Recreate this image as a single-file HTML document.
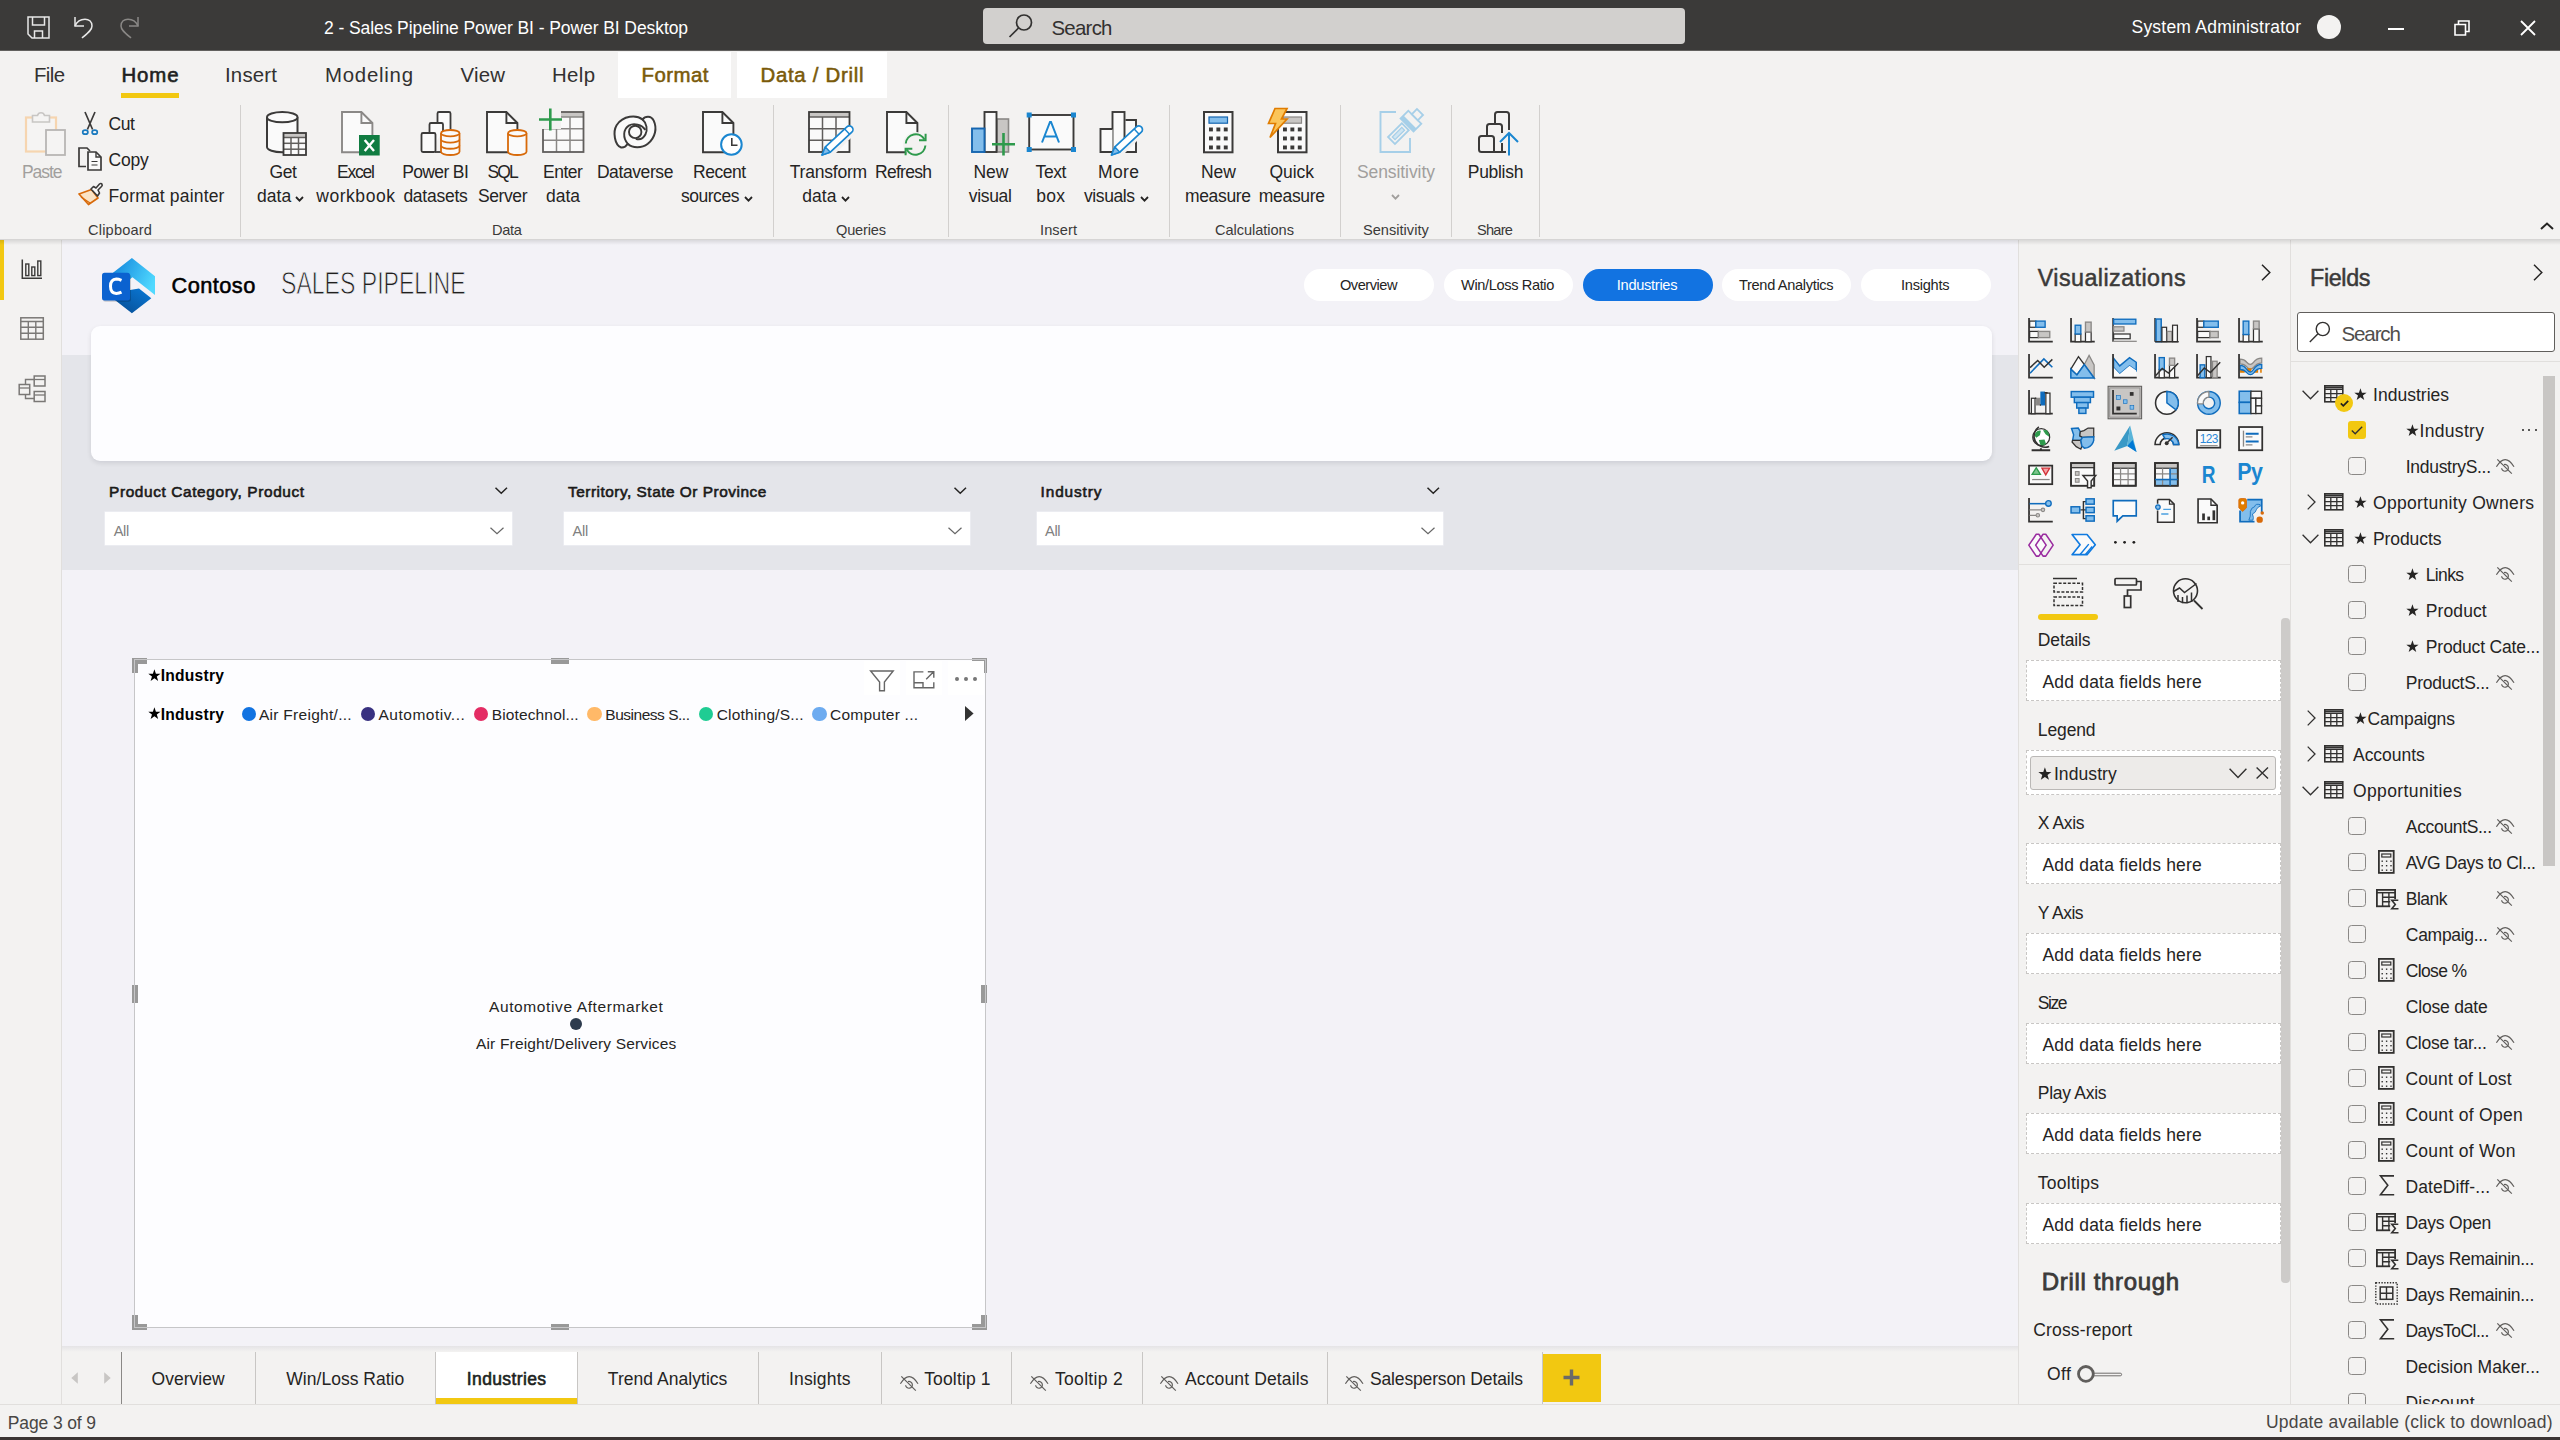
<!DOCTYPE html>
<html>
<head>
<meta charset="utf-8">
<title>Power BI Desktop</title>
<style>
*{box-sizing:border-box;margin:0;padding:0}
html,body{width:2560px;height:1440px;overflow:hidden;background:#f3f2f1;font-family:"Liberation Sans",sans-serif;color:#252423}
.a{position:absolute}
.t{position:absolute;white-space:nowrap;line-height:1;transform-origin:0 0}
.c{text-align:center}
svg{position:absolute;overflow:visible}
/* title bar */
#title{left:0;top:0;width:2560px;height:51px;background:linear-gradient(#3b3a39 0,#3b3a39 50px,#62615f 50px,#62615f 51px)}
#tsearch{left:983px;top:8px;width:702px;height:36px;background:#d2d0ce;border-radius:4px}
/* ribbon */
#ribbon{left:0;top:51px;width:2560px;height:188px;background:#f3f2f1}
#ribshadow{left:0;top:239px;width:2560px;height:6px;background:linear-gradient(rgba(0,0,0,0.13),rgba(0,0,0,0));z-index:5}
.tab{font-size:20.5px;color:#323130;top:65px}
.ctab{background:#fff;top:52px;height:46px}
.sep{width:1px;background:#d2d0ce;top:105px;height:132px}
.rl{font-size:18.4px;color:#252423}
.gl{font-size:14.6px;color:#3b3a39;top:222px}
/* left nav */
#lnav{left:0;top:240px;width:62px;height:1165px;background:#f3f2f1;border-right:1px solid #e1dfdd}
/* canvas */
#canvas{left:62px;top:240px;width:1956px;height:1106px;background:#f3f2f7;overflow:hidden}
#band{left:0;top:115px;width:1956px;height:215px;background:#e4e5ea}
/* panes */
#viz{left:2018px;top:240px;width:272px;height:1165px;background:#f3f2f1;border-left:1px solid #e1dfdd}
#fields{left:2290px;top:240px;width:270px;height:1165px;background:#f3f2f1;border-left:1px solid #e1dfdd}
/* page tabs */
#ptabs{left:62px;top:1346px;width:1956px;height:59px;background:#f3f2f1}
/* status */
#status{left:0;top:1404px;width:2560px;height:32px;background:#f3f2f1;border-top:1px solid #e1dfdd}
#taskbar{left:0;top:1437px;width:2560px;height:3px;background:#3b3433}
</style>
</head>
<body>
<!-- TITLE BAR -->
<div id="title" class="a">
<div id="tsearch" class="a"></div>
<svg style="left:27px;top:16px;" width="23" height="23" viewBox="0 0 23 23"><path d="M1 1H22V22H5L1 18Z" fill="none" stroke="#e8e8e8" stroke-width="1.5"/><path d="M5.5 1V9H17.5V1M7.5 22V15H15.5V22" fill="none" stroke="#e8e8e8" stroke-width="1.5"/></svg>
<svg style="left:72px;top:14px;" width="24" height="26" viewBox="0 0 24 26"><path d="M3 3V12H12" fill="none" stroke="#e8e8e8" stroke-width="1.5"/><path d="M3 12C7 3 20 3 20 12C20 16 16 19 10 24" fill="none" stroke="#e8e8e8" stroke-width="1.5"/></svg>
<svg style="left:117px;top:14px;" width="24" height="26" viewBox="0 0 24 26"><path d="M21 3V12H12" fill="none" stroke="#8a8886" stroke-width="1.5"/><path d="M21 12C17 3 4 3 4 12C4 16 8 19 14 24" fill="none" stroke="#8a8886" stroke-width="1.5"/></svg>
<div class="t" style="left:324.0px;top:20px;font-size:17.5px;letter-spacing:-0.08px;color:#ffffff;">2 - Sales Pipeline Power BI - Power BI Desktop</div>
<svg style="left:1008px;top:13px;" width="26" height="26" viewBox="0 0 26 26"><circle cx="16" cy="9.5" r="7.5" fill="none" stroke="#323130" stroke-width="1.7"/><path d="M10.5 15L1.5 24" stroke="#323130" stroke-width="1.7"/></svg>
<div class="t" style="left:1051.5px;top:18px;font-size:20.4px;letter-spacing:-0.73px;color:#323130;">Search</div>
<div class="t" style="left:2131.5px;top:19px;font-size:17.5px;letter-spacing:0.22px;color:#ffffff;">System Administrator</div>
<div class="a" style="left:2317px;top:15px;width:24px;height:24px;background:#f3f2f1;border-radius:50%;"></div>
<div class="a" style="left:2388px;top:28px;width:16px;height:2px;background:#fff;"></div>
<svg style="left:2454px;top:20px;" width="16" height="16" viewBox="0 0 16 16"><path d="M1 4.5H11.5V15H1Z M4.5 4.5V1H15V11.5H11.5" fill="none" stroke="#fff" stroke-width="1.6"/></svg>
<svg style="left:2520px;top:20px;" width="16" height="16" viewBox="0 0 16 16"><path d="M1 1L15 15M15 1L1 15" stroke="#fff" stroke-width="1.8"/></svg>

</div>
<!-- RIBBON -->
<div id="ribbon" class="a"></div>
<div class="a" style="left:618px;top:52px;width:113px;height:46px;background:#fff;"></div>
<div class="a" style="left:737px;top:52px;width:150px;height:46px;background:#fff;"></div>
<div class="t" style="left:34.0px;top:65px;font-size:20.4px;letter-spacing:-0.62px;color:#323130;">File</div>
<div class="t" style="left:121.5px;top:65px;font-size:20.4px;letter-spacing:0.86px;color:#201f1e;-webkit-text-stroke:0.6px #201f1e;">Home</div>
<div class="a" style="left:121px;top:93px;width:58px;height:4.5px;background:#f2c811;"></div>
<div class="t" style="left:225.0px;top:65px;font-size:20.4px;letter-spacing:0.20px;color:#323130;">Insert</div>
<div class="t" style="left:325.0px;top:65px;font-size:20.4px;letter-spacing:0.75px;color:#323130;">Modeling</div>
<div class="t" style="left:460.5px;top:65px;font-size:20.4px;letter-spacing:0.20px;color:#323130;">View</div>
<div class="t" style="left:552.0px;top:65px;font-size:20.4px;letter-spacing:0.35px;color:#323130;">Help</div>
<div class="t" style="left:641.5px;top:65px;font-size:20.4px;letter-spacing:0.48px;color:#7a5a0a;-webkit-text-stroke:0.55px #7a5a0a;">Format</div>
<div class="t" style="left:760.5px;top:65px;font-size:20.4px;letter-spacing:0.71px;color:#7a5a0a;-webkit-text-stroke:0.55px #7a5a0a;">Data / Drill</div>
<svg style="left:2540px;top:222px;" width="14" height="8" viewBox="0 0 14 8"><path d="M1 7L7 1.5L13 7" fill="none" stroke="#252423" stroke-width="2"/></svg>
<div class="a" style="left:240px;top:105px;width:1px;height:132px;background:#d2d0ce;"></div>
<div class="a" style="left:773px;top:105px;width:1px;height:132px;background:#d2d0ce;"></div>
<div class="a" style="left:948px;top:105px;width:1px;height:132px;background:#d2d0ce;"></div>
<div class="a" style="left:1169px;top:105px;width:1px;height:132px;background:#d2d0ce;"></div>
<div class="a" style="left:1340px;top:105px;width:1px;height:132px;background:#d2d0ce;"></div>
<div class="a" style="left:1451px;top:105px;width:1px;height:132px;background:#d2d0ce;"></div>
<div class="a" style="left:1539px;top:105px;width:1px;height:132px;background:#d2d0ce;"></div>
<div class="t" style="left:22.0px;top:164px;font-size:17.5px;letter-spacing:-1.06px;color:#a19f9d;">Paste</div>
<div class="t" style="left:108.4px;top:116px;font-size:17.5px;letter-spacing:-0.32px;color:#252423;">Cut</div>
<div class="t" style="left:108.4px;top:152px;font-size:17.5px;letter-spacing:-0.15px;color:#252423;">Copy</div>
<div class="t" style="left:108.4px;top:188px;font-size:17.5px;letter-spacing:0.17px;color:#252423;">Format painter</div>
<div class="t" style="left:269.4px;top:164px;font-size:17.5px;letter-spacing:-0.36px;color:#252423;">Get</div>
<div class="t" style="left:256.9px;top:188px;font-size:17.5px;letter-spacing:0.11px;color:#252423;">data</div>
<svg style="left:294.5px;top:195.5px;" width="9" height="6" viewBox="0 0 9 6"><path d="M1 1L4.5 4.6L8 1" fill="none" stroke="#252423" stroke-width="1.8"/></svg>
<div class="t" style="left:336.9px;top:164px;font-size:17.5px;letter-spacing:-1.17px;color:#252423;">Excel</div>
<div class="t" style="left:316.3px;top:188px;font-size:17.5px;letter-spacing:0.53px;color:#252423;">workbook</div>
<div class="t" style="left:402.2px;top:164px;font-size:17.5px;letter-spacing:-0.63px;color:#252423;">Power BI</div>
<div class="t" style="left:403.4px;top:188px;font-size:17.5px;letter-spacing:-0.25px;color:#252423;">datasets</div>
<div class="t" style="left:487.5px;top:164px;font-size:17.5px;letter-spacing:-1.86px;color:#252423;">SQL</div>
<div class="t" style="left:478.0px;top:188px;font-size:17.5px;letter-spacing:-0.41px;color:#252423;">Server</div>
<div class="t" style="left:543.0px;top:164px;font-size:17.5px;letter-spacing:-0.51px;color:#252423;">Enter</div>
<div class="t" style="left:546.0px;top:188px;font-size:17.5px;letter-spacing:-0.02px;color:#252423;">data</div>
<div class="t" style="left:596.9px;top:164px;font-size:17.5px;letter-spacing:-0.41px;color:#252423;">Dataverse</div>
<div class="t" style="left:693.0px;top:164px;font-size:17.5px;letter-spacing:-0.49px;color:#252423;">Recent</div>
<div class="t" style="left:681.0px;top:188px;font-size:17.5px;letter-spacing:-0.48px;color:#252423;">sources</div>
<svg style="left:744px;top:195.5px;" width="9" height="6" viewBox="0 0 9 6"><path d="M1 1L4.5 4.6L8 1" fill="none" stroke="#252423" stroke-width="1.8"/></svg>
<div class="t" style="left:789.7px;top:164px;font-size:17.5px;letter-spacing:-0.20px;color:#252423;">Transform</div>
<div class="t" style="left:802.2px;top:188px;font-size:17.5px;letter-spacing:0.11px;color:#252423;">data</div>
<svg style="left:840.5px;top:195.5px;" width="9" height="6" viewBox="0 0 9 6"><path d="M1 1L4.5 4.6L8 1" fill="none" stroke="#252423" stroke-width="1.8"/></svg>
<div class="t" style="left:875.0px;top:164px;font-size:17.5px;letter-spacing:-0.73px;color:#252423;">Refresh</div>
<div class="t" style="left:973.4px;top:164px;font-size:17.5px;letter-spacing:-0.03px;color:#252423;">New</div>
<div class="t" style="left:968.8px;top:188px;font-size:17.5px;letter-spacing:-0.33px;color:#252423;">visual</div>
<div class="t" style="left:1035.6px;top:164px;font-size:17.5px;letter-spacing:-0.46px;color:#252423;">Text</div>
<div class="t" style="left:1036.3px;top:188px;font-size:17.5px;letter-spacing:0.25px;color:#252423;">box</div>
<div class="t" style="left:1098.0px;top:164px;font-size:17.5px;letter-spacing:0.38px;color:#252423;">More</div>
<div class="t" style="left:1084.0px;top:188px;font-size:17.5px;letter-spacing:-0.42px;color:#252423;">visuals</div>
<svg style="left:1139.5px;top:195.5px;" width="9" height="6" viewBox="0 0 9 6"><path d="M1 1L4.5 4.6L8 1" fill="none" stroke="#252423" stroke-width="1.8"/></svg>
<div class="t" style="left:1201.0px;top:164px;font-size:17.5px;letter-spacing:-0.03px;color:#252423;">New</div>
<div class="t" style="left:1185.0px;top:188px;font-size:17.5px;letter-spacing:-0.35px;color:#252423;">measure</div>
<div class="t" style="left:1269.4px;top:164px;font-size:17.5px;letter-spacing:-0.04px;color:#252423;">Quick</div>
<div class="t" style="left:1258.8px;top:188px;font-size:17.5px;letter-spacing:-0.32px;color:#252423;">measure</div>
<div class="t" style="left:1356.9px;top:164px;font-size:17.5px;letter-spacing:-0.07px;color:#a19f9d;">Sensitivity</div>
<svg style="left:1391px;top:193.5px;" width="9" height="6" viewBox="0 0 9 6"><path d="M1 1L4.5 4.6L8 1" fill="none" stroke="#a19f9d" stroke-width="1.8"/></svg>
<div class="t" style="left:1467.8px;top:164px;font-size:17.5px;letter-spacing:-0.30px;color:#252423;">Publish</div>
<div class="t" style="left:88.0px;top:223px;font-size:14.6px;letter-spacing:0.19px;color:#3b3a39;">Clipboard</div>
<div class="t" style="left:492.0px;top:223px;font-size:14.6px;letter-spacing:-0.28px;color:#3b3a39;">Data</div>
<div class="t" style="left:836.0px;top:223px;font-size:14.6px;letter-spacing:-0.19px;color:#3b3a39;">Queries</div>
<div class="t" style="left:1040.0px;top:223px;font-size:14.6px;letter-spacing:0.10px;color:#3b3a39;">Insert</div>
<div class="t" style="left:1215.0px;top:223px;font-size:14.6px;letter-spacing:-0.05px;color:#3b3a39;">Calculations</div>
<div class="t" style="left:1363.0px;top:223px;font-size:14.6px;letter-spacing:0.01px;color:#3b3a39;">Sensitivity</div>
<div class="t" style="left:1477.0px;top:223px;font-size:14.6px;letter-spacing:-0.74px;color:#3b3a39;">Share</div>
<svg style="left:0px;top:100px;" width="1560" height="140" viewBox="0 100 1560 140"><rect x="26" y="117.5" width="30" height="34" fill="#f5f4f3" stroke="#f6d5b0" stroke-width="2.2"/><path d="M32.5 122V115.5H37.5A3.6 3.6 0 0 1 44.5 115.5H49.5V122Z" fill="#f5f4f3" stroke="#c8c6c4" stroke-width="1.6"/><rect x="46" y="130" width="19" height="25" fill="#f5f4f3" stroke="#b8b6b4" stroke-width="1.8"/><path d="M85 112L92.6 129.5M95 112L87.4 129.5" stroke="#3b3a39" stroke-width="1.7" fill="none"/><ellipse cx="85.3" cy="132.2" rx="2.6" ry="2" fill="none" stroke="#1a7abf" stroke-width="1.7"/><ellipse cx="94.7" cy="132.2" rx="2.6" ry="2" fill="none" stroke="#1a7abf" stroke-width="1.7"/><path d="M86 166.5H79V148H87L90 151" fill="none" stroke="#3b3a39" stroke-width="1.7"/><path d="M88 152H96L101 157V170H88Z" fill="#fafafa" stroke="#3b3a39" stroke-width="1.7"/><path d="M96 152V157H101" fill="none" stroke="#3b3a39" stroke-width="1.4"/><path d="M91.5 161.5H97.5M91.5 165H97.5" stroke="#3b3a39" stroke-width="1.2"/><path d="M79 194L91.5 189.5L98 198L88.5 204.5Z" fill="#fbe3c4" stroke="#d86a0a" stroke-width="1.7" stroke-linejoin="round"/><path d="M81 197L90 203" stroke="#d86a0a" stroke-width="1.4"/><path d="M91 189L93.5 186.5L96 188L99.5 184Q101 182.8 102 184.3Q102.6 185.5 101.5 186.5L98 190L99.5 193L97.5 196Z" fill="#fafafa" stroke="#3b3a39" stroke-width="1.6" stroke-linejoin="round"/><path d="M267 117.185V147.115A15.25 5.1850000000000005 0 0 0 297.5 147.115V117.185" fill="#fafafa" stroke="#3b3a39" stroke-width="2"/><ellipse cx="282.25" cy="117.185" rx="15.25" ry="5.1850000000000005" fill="#fafafa" stroke="#3b3a39" stroke-width="2"/><rect x="283.5" y="133" width="22.5" height="22" fill="#fafafa" stroke="none"/><rect x="283.5" y="133" width="22.5" height="4.5" fill="#c8c6c4"/><path d="M283.5 137.5H306.0" stroke="#605e5c" stroke-width="1.5"/><path d="M291.0 137.5V155" stroke="#605e5c" stroke-width="1.5"/><path d="M298.5 137.5V155" stroke="#605e5c" stroke-width="1.5"/><path d="M283.5 143.3H306.0" stroke="#605e5c" stroke-width="1.5"/><path d="M283.5 149.2H306.0" stroke="#605e5c" stroke-width="1.5"/><rect x="283.5" y="133" width="22.5" height="22" fill="none" stroke="#3b3a39" stroke-width="1.8"/><path d="M342 112H361.4L372.4 123V152.3H342Z" fill="#fafafa" stroke="#8a8886" stroke-width="1.9"/><path d="M361.4 112V123H372.4" fill="none" stroke="#8a8886" stroke-width="1.9"/><rect x="359" y="135" width="20.7" height="20.5" fill="#107c41"/><path d="M364.7 140L374 151M374 140L364.7 151" stroke="#fff" stroke-width="2.4"/><path d="M437.5 128V113.5Q437.5 112 439 112H449Q450.5 112 450.5 113.5V130" fill="#fafafa" stroke="#3b3a39" stroke-width="1.8"/><path d="M429.5 152V124.5Q429.5 123 431 123H441.5Q443 123 443 124.5V131" fill="#fafafa" stroke="#3b3a39" stroke-width="1.8"/><rect x="421.5" y="133" width="14" height="19" rx="1.5" fill="#fafafa" stroke="#3b3a39" stroke-width="1.8"/><path d="M435 152H441" stroke="#3b3a39" stroke-width="1.8"/><path d="M441 133.145V151.855A9.25 3.145 0 0 0 459.5 151.855V133.145" fill="#fafafa" stroke="#d86a0a" stroke-width="1.8"/><ellipse cx="450.25" cy="133.145" rx="9.25" ry="3.145" fill="#fafafa" stroke="#d86a0a" stroke-width="1.8"/><path d="M441 139.3816666666667A9.25 3.145 0 0 0 459.5 139.3816666666667" fill="none" stroke="#d86a0a" stroke-width="1.8"/><path d="M441 145.61833333333334A9.25 3.145 0 0 0 459.5 145.61833333333334" fill="none" stroke="#d86a0a" stroke-width="1.8"/><path d="M487 112H506.4L517.4 123V152.3H487Z" fill="#fafafa" stroke="#3b3a39" stroke-width="1.9"/><path d="M506.4 112V123H517.4" fill="none" stroke="#3b3a39" stroke-width="1.9"/><path d="M508 133.145V151.855A9.25 3.145 0 0 0 526.5 151.855V133.145" fill="#fafafa" stroke="#d86a0a" stroke-width="1.8"/><ellipse cx="517.25" cy="133.145" rx="9.25" ry="3.145" fill="#fafafa" stroke="#d86a0a" stroke-width="1.8"/><rect x="543" y="112" width="40.5" height="40" fill="#fafafa" stroke="none"/><rect x="543" y="112" width="40.5" height="5" fill="#c8c6c4"/><path d="M543 117H583.5" stroke="#8a8886" stroke-width="1.5"/><path d="M556.5 117V152" stroke="#8a8886" stroke-width="1.5"/><path d="M570.0 117V152" stroke="#8a8886" stroke-width="1.5"/><path d="M543 128.7H583.5" stroke="#8a8886" stroke-width="1.5"/><path d="M543 140.3H583.5" stroke="#8a8886" stroke-width="1.5"/><rect x="543" y="112" width="40.5" height="40" fill="none" stroke="#605e5c" stroke-width="1.8"/><rect x="540" y="109" width="21" height="20" fill="#f3f2f1"/><path d="M550.3 108.5V130.5M539 119.5H562" stroke="#2e9a4c" stroke-width="2.6"/><path d="M642.5 119.6 C636.5 114.6 623.2 115.3 616.6 125.2 C612.6 131.9 614.6 145.2 621.2 147.5 C624.5 147.8 626.5 145.8 627.8 143.8 C632.5 148.5 641.8 148.5 647.8 143.8 C655.7 137.2 657.1 127.9 653.7 120.6 C651.1 115.3 645.1 115.9 642.5 119.6Z" fill="#fafafa" stroke="#3b3a39" stroke-width="2" stroke-linejoin="round"/><path d="M627.8 143.8 C622.5 137.8 623.2 129.2 628.8 125.6 C633.8 122.6 641.8 124.6 645.4 129.9" fill="none" stroke="#3b3a39" stroke-width="1.9"/><path d="M642.5 119.6 C646.8 123.2 647.8 129.9 645.4 134.5 C643.1 138.8 639.1 139.8 635.8 138.8" fill="none" stroke="#3b3a39" stroke-width="1.9"/><circle cx="635.2" cy="131.9" r="6.2" fill="none" stroke="#3b3a39" stroke-width="1.9"/><path d="M703 112H722.4L733.4 123V152.3H703Z" fill="#fafafa" stroke="#3b3a39" stroke-width="1.9"/><path d="M722.4 112V123H733.4" fill="none" stroke="#3b3a39" stroke-width="1.9"/><circle cx="731.4" cy="144.5" r="10.3" fill="#fff" stroke="#1a86d0" stroke-width="2"/><path d="M731.8 138V145.3H737.5" fill="none" stroke="#3b3a39" stroke-width="1.6"/><rect x="809" y="112" width="40.5" height="40" fill="#fafafa" stroke="none"/><rect x="809" y="112" width="40.5" height="5" fill="#c8c6c4"/><path d="M809 117H849.5" stroke="#605e5c" stroke-width="1.5"/><path d="M822.5 117V152" stroke="#605e5c" stroke-width="1.5"/><path d="M836.0 117V152" stroke="#605e5c" stroke-width="1.5"/><path d="M809 128.7H849.5" stroke="#605e5c" stroke-width="1.5"/><path d="M809 140.3H849.5" stroke="#605e5c" stroke-width="1.5"/><rect x="809" y="112" width="40.5" height="40" fill="none" stroke="#3b3a39" stroke-width="1.8"/><path d="M851 128L856 133L832 157L820 157Z" fill="#f3f2f1"/><path d="M822.0 155.0L830.3 152.2L851.8 132.2A3.6 3.6 0 0 0 846.9 126.9L825.4 146.9Z" fill="#fff" stroke="#1a86d0" stroke-width="1.7" stroke-linejoin="round"/><path d="M822.0 155.0L830.3 152.2L825.4 146.9Z" fill="#83beec" stroke="#1a86d0" stroke-width="1.4" stroke-linejoin="round"/><path d="M849.6 134.2L844.7 129.0" stroke="#1a86d0" stroke-width="1.5"/><path d="M887 112H906.4L917.4 123V152.3H887Z" fill="#fafafa" stroke="#3b3a39" stroke-width="1.9"/><path d="M906.4 112V123H917.4" fill="none" stroke="#3b3a39" stroke-width="1.9"/><circle cx="915.6" cy="144.5" r="12.5" fill="#f3f2f1"/><path d="M905.8 143.5A10 10 0 0 1 924.5 139.5M925.4 145.5A10 10 0 0 1 906.7 149.5" fill="none" stroke="#2e9a4c" stroke-width="2"/><path d="M919 140.2H925.6V133.8M912.3 148.8H905.6V155.2" fill="none" stroke="#2e9a4c" stroke-width="2"/><rect x="997" y="119" width="11.5" height="33" fill="#c8c6c4" stroke="#8a8886" stroke-width="1.6"/><rect x="984.5" y="112" width="12" height="40" fill="#fafafa" stroke="#3b3a39" stroke-width="1.9"/><rect x="972" y="128.5" width="12.5" height="23.5" fill="#83beec" stroke="#1565b0" stroke-width="1.9"/><path d="M1003.5 133V155.5M992 144.3H1015" stroke="#2e9a4c" stroke-width="2.6"/><rect x="1029.2" y="115" width="44.3" height="34.5" fill="#fafafa" stroke="#3b3a39" stroke-width="1.9"/><rect x="1026.7" y="112.5" width="5" height="5" fill="#1a86d0"/><rect x="1071.0" y="112.5" width="5" height="5" fill="#1a86d0"/><rect x="1026.7" y="147.0" width="5" height="5" fill="#1a86d0"/><rect x="1071.0" y="147.0" width="5" height="5" fill="#1a86d0"/><path d="M1042 142.5L1050 122H1051L1059 142.5M1044.5 136.5H1056.5" fill="none" stroke="#1a86d0" stroke-width="2"/><path d="M1125.5 120H1136V152H1125" fill="#fafafa" stroke="#3b3a39" stroke-width="1.9"/><rect x="1112.5" y="112" width="12" height="40" fill="#fafafa" stroke="#3b3a39" stroke-width="1.9"/><path d="M1112.5 129H1100.5V152H1112.5" fill="#fafafa" stroke="#3b3a39" stroke-width="1.9"/><path d="M1100 152H1136" stroke="#3b3a39" stroke-width="1.9"/><path d="M1140 128L1145 133L1121 157L1110 157Z" fill="#f3f2f1"/><path d="M1111.5 155.0L1119.8 152.2L1141.3 132.2A3.6 3.6 0 0 0 1136.4 126.9L1114.9 146.9Z" fill="#fff" stroke="#1a86d0" stroke-width="1.7" stroke-linejoin="round"/><path d="M1111.5 155.0L1119.8 152.2L1114.9 146.9Z" fill="#83beec" stroke="#1a86d0" stroke-width="1.4" stroke-linejoin="round"/><path d="M1139.1 134.2L1134.2 129.0" stroke="#1a86d0" stroke-width="1.5"/><rect x="1204" y="112" width="28.5" height="40.3" fill="#fafafa" stroke="#3b3a39" stroke-width="2"/><rect x="1209" y="117" width="18.5" height="6.2" fill="#83beec" stroke="#1565b0" stroke-width="1.2"/><rect x="1209.0" y="127.5" width="3.9" height="3.9" fill="#3b3a39"/><rect x="1216.4" y="127.5" width="3.9" height="3.9" fill="#3b3a39"/><rect x="1223.8" y="127.5" width="3.9" height="3.9" fill="#3b3a39"/><rect x="1209.0" y="136.5" width="3.9" height="3.9" fill="#3b3a39"/><rect x="1216.4" y="136.5" width="3.9" height="3.9" fill="#3b3a39"/><rect x="1223.8" y="136.5" width="3.9" height="3.9" fill="#3b3a39"/><rect x="1209.0" y="145.5" width="3.9" height="3.9" fill="#3b3a39"/><rect x="1216.4" y="145.5" width="3.9" height="3.9" fill="#3b3a39"/><rect x="1223.8" y="145.5" width="3.9" height="3.9" fill="#3b3a39"/><rect x="1278" y="112" width="28.5" height="40.3" fill="#fafafa" stroke="#3b3a39" stroke-width="2"/><rect x="1283" y="117" width="18.5" height="6.2" fill="#c8c6c4" stroke="#8a8886" stroke-width="1.2"/><rect x="1283.0" y="127.5" width="3.9" height="3.9" fill="#3b3a39"/><rect x="1290.4" y="127.5" width="3.9" height="3.9" fill="#3b3a39"/><rect x="1297.8" y="127.5" width="3.9" height="3.9" fill="#3b3a39"/><rect x="1283.0" y="136.5" width="3.9" height="3.9" fill="#3b3a39"/><rect x="1290.4" y="136.5" width="3.9" height="3.9" fill="#3b3a39"/><rect x="1297.8" y="136.5" width="3.9" height="3.9" fill="#3b3a39"/><rect x="1283.0" y="145.5" width="3.9" height="3.9" fill="#3b3a39"/><rect x="1290.4" y="145.5" width="3.9" height="3.9" fill="#3b3a39"/><rect x="1297.8" y="145.5" width="3.9" height="3.9" fill="#3b3a39"/><path d="M1275 108.5H1287L1281.5 119H1287L1270 137.5L1275.5 123.5H1268.5Z" fill="#fbc55a" stroke="#e07c00" stroke-width="1.7" stroke-linejoin="miter"/><path d="M1396 112H1380.5V152H1410V138" fill="none" stroke="#a6cfe8" stroke-width="1.9"/><g transform="translate(1401 131) rotate(-45) scale(1.22)"><rect x="-11" y="-4" width="16" height="8" fill="#f3f2f1" stroke="#a6cfe8" stroke-width="1.5"/><rect x="-8.5" y="-1.6" width="11" height="3.2" fill="#cfe5f2" stroke="#a6cfe8" stroke-width="1"/><rect x="7" y="-7.5" width="9" height="15" fill="#f3f2f1" stroke="#a6cfe8" stroke-width="1.5"/><rect x="7" y="-7.5" width="3.4" height="15" fill="#a6cfe8"/><rect x="16" y="-3.5" width="6" height="7" fill="#f3f2f1" stroke="#a6cfe8" stroke-width="1.5"/></g><path d="M1495 124V114.5Q1495 112 1497.5 112H1506.5Q1509 112 1509 114.5V130" fill="none" stroke="#3b3a39" stroke-width="2"/><path d="M1487 136V126.5Q1487 124 1489.5 124H1499.5Q1502 124 1502 126.5V133M1502 143V152" fill="none" stroke="#3b3a39" stroke-width="2"/><path d="M1494 152H1481.5Q1479 152 1479 149.5V138.5Q1479 136 1481.5 136H1491.5Q1494 136 1494 138.5V152H1506" fill="none" stroke="#3b3a39" stroke-width="2"/><path d="M1509 155.5V134M1500 142L1509 133L1518 142" fill="none" stroke="#1a86d0" stroke-width="2"/></svg>

<div id="ribshadow" class="a"></div>
<!-- LEFT NAV -->
<div id="lnav" class="a">
<div class="a" style="left:0;top:-240px"><div class="a" style="left:0px;top:240px;width:4px;height:60px;background:#f2c811;"></div>
<svg style="left:0px;top:240px;" width="62" height="180" viewBox="0 240 62 180"><path d="M22.3 259.5V278.3H42" fill="none" stroke="#3b3a39" stroke-width="1.5"/><rect x="25.8" y="264" width="3" height="11.6" fill="none" stroke="#3b3a39" stroke-width="1.4"/><rect x="31.8" y="267" width="3" height="8.6" fill="none" stroke="#3b3a39" stroke-width="1.4"/><rect x="37.8" y="261" width="3" height="14.6" fill="none" stroke="#3b3a39" stroke-width="1.4"/><rect x="20.8" y="317.8" width="22.5" height="21.4" fill="none" stroke="#7a7876" stroke-width="1.5"/><path d="M20.8 321.5H43.3M20.8 327.3H43.3M20.8 333.2H43.3M28.3 321.5V339.2M35.8 321.5V339.2" stroke="#7a7876" stroke-width="1.4" fill="none"/><rect x="19.2" y="384.5" width="10.5" height="10" fill="none" stroke="#7a7876" stroke-width="1.5"/><path d="M19.2 388H29.7" stroke="#7a7876" stroke-width="1.3"/><rect x="34.2" y="376" width="10.8" height="10" fill="none" stroke="#7a7876" stroke-width="1.5"/><path d="M34.2 379.5H45" stroke="#7a7876" stroke-width="1.3"/><rect x="34.2" y="391.5" width="10.8" height="10" fill="none" stroke="#7a7876" stroke-width="1.5"/><path d="M34.2 395H45" stroke="#7a7876" stroke-width="1.3"/><path d="M25.5 384.5V379.5H34.2M25.5 394.5V398.5H34.2" fill="none" stroke="#7a7876" stroke-width="1.4"/></svg>
</div>
</div>
<!-- CANVAS -->
<div id="canvas" class="a">
<div id="band" class="a"></div>
<div class="a" style="left:-62px;top:-240px"><svg style="left:100px;top:255px;" width="60" height="62" viewBox="100 255 60 62"><defs><linearGradient id="lg1" x1="0" y1="0.2" x2="1" y2="0.6"><stop offset="0" stop-color="#1488dd"/><stop offset="1" stop-color="#50d9ff"/></linearGradient><linearGradient id="lg2" x1="0" y1="1" x2="1" y2="0"><stop offset="0" stop-color="#064a8f"/><stop offset="1" stop-color="#0a7ad8"/></linearGradient></defs><path d="M131.9 258L155 276.3V295L132.5 277.3L113 292.5V272.8Z" fill="url(#lg1)"/><path d="M139 288.6L151.3 298.2L131.9 313.2L113 298.6V290H130Z" fill="url(#lg2)"/><rect x="103" y="274.2" width="28" height="27.6" rx="2.5" fill="#000" opacity="0.18"/><rect x="102" y="272.8" width="28" height="27.6" rx="2.5" fill="#0b62d0"/><path d="M121.5 280.3Q118.5 279 116.3 279Q110.5 279.3 110.5 286.3Q110.5 293.2 116.3 293.5Q119 293.5 121.5 292.2" fill="none" stroke="#fff" stroke-width="3"/></svg>
<div class="t" style="left:171.5px;top:275px;font-size:21.8px;letter-spacing:0.43px;color:#000;-webkit-text-stroke:0.55px #000;">Contoso</div>
<div class="t" style="left:281.0px;top:268px;font-size:31px;transform:scaleX(0.7440);color:#201f1e;-webkit-text-stroke:0.85px #f3f2f7;">SALES PIPELINE</div>
<div class="a" style="left:1304.2px;top:268.8px;width:129.8px;height:32.2px;background:#ffffff;border-radius:16.1px;"></div>
<div class="t" style="left:1340.0px;top:278px;font-size:14.6px;letter-spacing:-0.48px;color:#252423;">Overview</div>
<div class="a" style="left:1443.8px;top:268.8px;width:129.4px;height:32.2px;background:#ffffff;border-radius:16.1px;"></div>
<div class="t" style="left:1461.0px;top:278px;font-size:14.6px;letter-spacing:-0.37px;color:#252423;">Win/Loss Ratio</div>
<div class="a" style="left:1582.6px;top:268.8px;width:130px;height:32.2px;background:#1273e1;border-radius:16.1px;"></div>
<div class="t" style="left:1616.8px;top:278px;font-size:14.6px;letter-spacing:-0.29px;color:#fff;">Industries</div>
<div class="a" style="left:1722px;top:268.8px;width:129.4px;height:32.2px;background:#ffffff;border-radius:16.1px;"></div>
<div class="t" style="left:1739.0px;top:278px;font-size:14.6px;letter-spacing:-0.33px;color:#252423;">Trend Analytics</div>
<div class="a" style="left:1861px;top:268.8px;width:129.8px;height:32.2px;background:#ffffff;border-radius:16.1px;"></div>
<div class="t" style="left:1901.0px;top:278px;font-size:14.6px;letter-spacing:-0.26px;color:#252423;">Insights</div>
<div class="a" style="left:90.5px;top:326px;width:1901px;height:135px;background:#fdfdff;border-radius:9px;box-shadow:0 2px 5px rgba(0,0,30,0.10);"></div>
<div class="t" style="left:109.0px;top:484px;font-size:15.4px;letter-spacing:0.62px;color:#1b1a19;-webkit-text-stroke:0.6px #1b1a19;">Product Category, Product</div>
<svg style="left:495px;top:487px;" width="12.5" height="7" viewBox="0 0 12.5 7"><path d="M0.5 0.7L6.25 6.3L12.0 0.7" fill="none" stroke="#252423" stroke-width="1.5"/></svg>
<div class="a" style="left:105px;top:512px;width:407px;height:33px;background:#ffffff;box-shadow:0 0 0 0.6px #f0f0f5;"></div>
<div class="t" style="left:113.7px;top:524px;font-size:14.6px;letter-spacing:-0.31px;color:#808080;">All</div>
<svg style="left:489.5px;top:527px;" width="14" height="7.5" viewBox="0 0 14 7.5"><path d="M0.5 0.7L7.0 6.8L13.5 0.7" fill="none" stroke="#666" stroke-width="1.2"/></svg>
<div class="t" style="left:568.0px;top:484px;font-size:15.4px;letter-spacing:0.51px;color:#1b1a19;-webkit-text-stroke:0.6px #1b1a19;">Territory, State Or Province</div>
<svg style="left:954px;top:487px;" width="12.5" height="7" viewBox="0 0 12.5 7"><path d="M0.5 0.7L6.25 6.3L12.0 0.7" fill="none" stroke="#252423" stroke-width="1.5"/></svg>
<div class="a" style="left:564px;top:512px;width:406px;height:33px;background:#ffffff;box-shadow:0 0 0 0.6px #f0f0f5;"></div>
<div class="t" style="left:572.6px;top:524px;font-size:14.6px;letter-spacing:-0.31px;color:#808080;">All</div>
<svg style="left:948px;top:527px;" width="14" height="7.5" viewBox="0 0 14 7.5"><path d="M0.5 0.7L7.0 6.8L13.5 0.7" fill="none" stroke="#666" stroke-width="1.2"/></svg>
<div class="t" style="left:1040.6px;top:484px;font-size:15.4px;letter-spacing:0.86px;color:#1b1a19;-webkit-text-stroke:0.6px #1b1a19;">Industry</div>
<svg style="left:1427px;top:487px;" width="12.5" height="7" viewBox="0 0 12.5 7"><path d="M0.5 0.7L6.25 6.3L12.0 0.7" fill="none" stroke="#252423" stroke-width="1.5"/></svg>
<div class="a" style="left:1037px;top:512px;width:406px;height:33px;background:#ffffff;box-shadow:0 0 0 0.6px #f0f0f5;"></div>
<div class="t" style="left:1045.0px;top:524px;font-size:14.6px;letter-spacing:-0.31px;color:#808080;">All</div>
<svg style="left:1420.5px;top:527px;" width="14" height="7.5" viewBox="0 0 14 7.5"><path d="M0.5 0.7L7.0 6.8L13.5 0.7" fill="none" stroke="#666" stroke-width="1.2"/></svg>
<div class="a" style="left:134px;top:659px;width:852px;height:669px;background:#fdfdff;border:1px solid #c3c3c6;"></div>
<div class="a" style="left:132px;top:658px;width:15px;height:6px;background:#999999;"></div>
<div class="a" style="left:132px;top:658px;width:6px;height:15px;background:#999999;"></div>
<div class="a" style="left:972px;top:658px;width:15px;height:3px;background:#999999;"></div>
<div class="a" style="left:984px;top:658px;width:3px;height:15px;background:#999999;"></div>
<div class="a" style="left:132px;top:1324px;width:15px;height:6px;background:#999999;"></div>
<div class="a" style="left:132px;top:1315px;width:6px;height:15px;background:#999999;"></div>
<div class="a" style="left:972px;top:1324px;width:15px;height:6px;background:#999999;"></div>
<div class="a" style="left:981px;top:1315px;width:6px;height:15px;background:#999999;"></div>
<div class="a" style="left:551px;top:658px;width:18px;height:6px;background:#999999;"></div>
<div class="a" style="left:551px;top:1324px;width:18px;height:6px;background:#999999;"></div>
<div class="a" style="left:132px;top:985px;width:6px;height:18px;background:#999999;"></div>
<div class="a" style="left:981px;top:985px;width:6px;height:18px;background:#999999;"></div>
<div class="a" style="left:864px;top:661px;width:36px;height:34px;background:#ffffff;"></div>
<div class="a" style="left:906px;top:661px;width:36px;height:34px;background:#ffffff;"></div>
<div class="a" style="left:948px;top:661px;width:36px;height:34px;background:#ffffff;"></div>
<div class="a" style="left:134px;top:659px;width:852px;height:669px;border:1px solid #c6c6c8;"></div>
<svg style="left:147.8px;top:668.8px;" width="12.8" height="12.16" viewBox="0 0 100 95"><polygon points="50.0,2.6 61.8,36.4 97.6,37.1 69.0,58.8 79.4,93.1 50.0,72.6 20.6,93.1 31.0,58.8 2.4,37.1 38.2,36.4" fill="#000"/></svg>
<div class="t" style="left:160.7px;top:668px;font-size:15.6px;letter-spacing:0.25px;color:#000;font-weight:700;">Industry</div>
<svg style="left:868px;top:668px;" width="28" height="26" viewBox="868 668 28 26"><path d="M870.6 671H893.2L884.4 682V690.8H879.6V682Z" fill="none" stroke="#666" stroke-width="1.4" stroke-linejoin="miter"/></svg>
<svg style="left:911px;top:669px;" width="26" height="22" viewBox="911 669 26 22"><path d="M923.4 671.9H914V687.8H933.8V682.2M914 682.7H923V687.8M926.2 679.2L933.6 671.8M927.8 671.8H933.8V677.8" fill="none" stroke="#666" stroke-width="1.4"/></svg>
<div class="a" style="left:955.0px;top:677px;width:3.8px;height:3.8px;background:#777;border-radius:50%;"></div>
<div class="a" style="left:964.1px;top:677px;width:3.8px;height:3.8px;background:#777;border-radius:50%;"></div>
<div class="a" style="left:973.1px;top:677px;width:3.8px;height:3.8px;background:#777;border-radius:50%;"></div>
<svg style="left:147.8px;top:707.2px;" width="12.8" height="12.16" viewBox="0 0 100 95"><polygon points="50.0,2.6 61.8,36.4 97.6,37.1 69.0,58.8 79.4,93.1 50.0,72.6 20.6,93.1 31.0,58.8 2.4,37.1 38.2,36.4" fill="#000"/></svg>
<div class="t" style="left:160.7px;top:707px;font-size:15.6px;letter-spacing:0.25px;color:#000;font-weight:700;">Industry</div>
<div class="a" style="left:241.8px;top:706.5px;width:14.4px;height:14.4px;background:#1273e1;border-radius:50%;"></div>
<div class="t" style="left:259.0px;top:707px;font-size:15.5px;letter-spacing:0.28px;color:#252423;">Air Freight/...</div>
<div class="a" style="left:360.5px;top:706.5px;width:14.4px;height:14.4px;background:#393180;border-radius:50%;"></div>
<div class="t" style="left:378.5px;top:707px;font-size:15.5px;letter-spacing:0.51px;color:#252423;">Automotiv...</div>
<div class="a" style="left:473.8px;top:706.5px;width:14.4px;height:14.4px;background:#e42c64;border-radius:50%;"></div>
<div class="t" style="left:491.7px;top:707px;font-size:15.5px;letter-spacing:0.14px;color:#252423;">Biotechnol...</div>
<div class="a" style="left:587.3px;top:706.5px;width:14.4px;height:14.4px;background:#ffb968;border-radius:50%;"></div>
<div class="t" style="left:605.3px;top:707px;font-size:15.5px;letter-spacing:-0.48px;color:#252423;">Business S...</div>
<div class="a" style="left:699.0999999999999px;top:706.5px;width:14.4px;height:14.4px;background:#1fcc93;border-radius:50%;"></div>
<div class="t" style="left:716.7px;top:707px;font-size:15.5px;letter-spacing:0.21px;color:#252423;">Clothing/S...</div>
<div class="a" style="left:812.3px;top:706.5px;width:14.4px;height:14.4px;background:#6dabf0;border-radius:50%;"></div>
<div class="t" style="left:830.0px;top:707px;font-size:15.5px;letter-spacing:0.25px;color:#252423;">Computer ...</div>
<svg style="left:964.5px;top:705.5px;" width="9" height="15" viewBox="0 0 9 15"><path d="M0 0L8.6 7.5L0 15Z" fill="#333"/></svg>
<div class="t" style="left:489.0px;top:999px;font-size:15.5px;letter-spacing:0.61px;color:#252423;">Automotive Aftermarket</div>
<div class="a" style="left:569.8px;top:1017.8px;width:12px;height:12px;background:#2d3b4e;border-radius:50%;"></div>
<div class="t" style="left:476.0px;top:1036px;font-size:15.5px;letter-spacing:0.17px;color:#252423;">Air Freight/Delivery Services</div>
</div>
</div>
<!-- PAGE TABS -->
<div id="ptabs" class="a">
<div class="a" style="left:-62px;top:-1346px"><div class="a" style="left:62px;top:1346px;width:1956px;height:6px;background:linear-gradient(#e4e3e6,#f3f2f1);"></div>
<div class="a" style="left:121.0px;top:1352px;width:1px;height:52px;background:#8a8886;"></div>
<div class="a" style="left:255.0px;top:1352px;width:1px;height:52px;background:#c8c6c4;"></div>
<div class="a" style="left:435.0px;top:1352px;width:1px;height:52px;background:#c8c6c4;"></div>
<div class="a" style="left:576.8px;top:1352px;width:1px;height:52px;background:#c8c6c4;"></div>
<div class="a" style="left:757.5px;top:1352px;width:1px;height:52px;background:#c8c6c4;"></div>
<div class="a" style="left:880.5px;top:1352px;width:1px;height:52px;background:#c8c6c4;"></div>
<div class="a" style="left:1010.8px;top:1352px;width:1px;height:52px;background:#c8c6c4;"></div>
<div class="a" style="left:1141.9px;top:1352px;width:1px;height:52px;background:#c8c6c4;"></div>
<div class="a" style="left:1327.0px;top:1352px;width:1px;height:52px;background:#c8c6c4;"></div>
<div class="a" style="left:1541.9px;top:1352px;width:1px;height:52px;background:#c8c6c4;"></div>
<svg style="left:70.5px;top:1372px;" width="7" height="12" viewBox="0 0 7 12"><path d="M6.8 0.2L0.3 6L6.8 11.8Z" fill="#c8c6c4"/></svg>
<svg style="left:104px;top:1372px;" width="7" height="12" viewBox="0 0 7 12"><path d="M0.2 0.2L6.7 6L0.2 11.8Z" fill="#c8c6c4"/></svg>
<div class="a" style="left:436px;top:1352px;width:141px;height:52px;background:#ffffff;"></div>
<div class="a" style="left:436px;top:1398px;width:141px;height:6px;background:#f2c811;"></div>
<div class="t" style="left:151.5px;top:1371px;font-size:17.5px;letter-spacing:0.02px;color:#252423;">Overview</div>
<div class="t" style="left:286.3px;top:1371px;font-size:17.5px;letter-spacing:0.02px;color:#252423;">Win/Loss Ratio</div>
<div class="t" style="left:466.8px;top:1371px;font-size:17.5px;letter-spacing:0.37px;color:#201f1e;-webkit-text-stroke:0.6px #201f1e;">Industries</div>
<div class="t" style="left:607.8px;top:1371px;font-size:17.5px;letter-spacing:0.04px;color:#252423;">Trend Analytics</div>
<div class="t" style="left:789.0px;top:1371px;font-size:17.5px;letter-spacing:0.16px;color:#252423;">Insights</div>
<svg style="left:899.9px;top:1376px;" width="19" height="15" viewBox="0 0 19 15"><path d="M0.4 7.8Q9.2 -6.6 18 7.8" fill="none" stroke="#605e5c" stroke-width="1.2"/><path d="M5.6 9.2A3.4 3.4 0 1 0 8 5.6" fill="none" stroke="#605e5c" stroke-width="1.2"/><path d="M1.3 0.4L15.8 14.6" stroke="#605e5c" stroke-width="1.2"/></svg>
<div class="t" style="left:924.2px;top:1371px;font-size:17.5px;letter-spacing:0.15px;color:#252423;">Tooltip 1</div>
<svg style="left:1030.2px;top:1376px;" width="19" height="15" viewBox="0 0 19 15"><path d="M0.4 7.8Q9.2 -6.6 18 7.8" fill="none" stroke="#605e5c" stroke-width="1.2"/><path d="M5.6 9.2A3.4 3.4 0 1 0 8 5.6" fill="none" stroke="#605e5c" stroke-width="1.2"/><path d="M1.3 0.4L15.8 14.6" stroke="#605e5c" stroke-width="1.2"/></svg>
<div class="t" style="left:1055.0px;top:1371px;font-size:17.5px;letter-spacing:0.31px;color:#252423;">Tooltip 2</div>
<svg style="left:1160.3px;top:1376px;" width="19" height="15" viewBox="0 0 19 15"><path d="M0.4 7.8Q9.2 -6.6 18 7.8" fill="none" stroke="#605e5c" stroke-width="1.2"/><path d="M5.6 9.2A3.4 3.4 0 1 0 8 5.6" fill="none" stroke="#605e5c" stroke-width="1.2"/><path d="M1.3 0.4L15.8 14.6" stroke="#605e5c" stroke-width="1.2"/></svg>
<div class="t" style="left:1185.0px;top:1371px;font-size:17.5px;letter-spacing:0.14px;color:#252423;">Account Details</div>
<svg style="left:1345.3px;top:1376px;" width="19" height="15" viewBox="0 0 19 15"><path d="M0.4 7.8Q9.2 -6.6 18 7.8" fill="none" stroke="#605e5c" stroke-width="1.2"/><path d="M5.6 9.2A3.4 3.4 0 1 0 8 5.6" fill="none" stroke="#605e5c" stroke-width="1.2"/><path d="M1.3 0.4L15.8 14.6" stroke="#605e5c" stroke-width="1.2"/></svg>
<div class="t" style="left:1370.0px;top:1371px;font-size:17.5px;letter-spacing:-0.15px;color:#252423;">Salesperson Details</div>
<div class="a" style="left:1543px;top:1354px;width:58px;height:47.5px;background:#f2c811;"></div>
<svg style="left:1563px;top:1369px;" width="17" height="17" viewBox="0 0 17 17"><path d="M8.5 0.5V16.5M0.5 8.5H16.5" stroke="#6b6a68" stroke-width="3.4"/></svg>
</div>
</div>
<!-- VIZ PANE -->
<div id="viz" class="a">
<div class="a" style="left:-2019px;top:-240px"><div class="t" style="left:2037.8px;top:267px;font-size:23.3px;letter-spacing:0.44px;color:#3b3a39;-webkit-text-stroke:0.5px #3b3a39;">Visualizations</div>
<svg style="left:2261px;top:264px;" width="10" height="17" viewBox="0 0 10 17"><path d="M1 0.8L8.8 8.5L1 16.2" fill="none" stroke="#252423" stroke-width="1.5"/></svg>
<svg style="left:2028.3px;top:318.4px;" width="25.8" height="25.8" viewBox="0 0 25 25"><path d="M1 0V23H24" fill="none" stroke="#323130" stroke-width="1.7" /><rect x="1.6" y="3" width="6" height="6" fill="#fafafa" stroke="#323130" stroke-width="1.2"/><rect x="7.6" y="3" width="9" height="6" fill="#83beec" stroke="#0f6cbd" stroke-width="1.3"/><rect x="1.6" y="13" width="8.5" height="6" fill="#fafafa" stroke="#323130" stroke-width="1.2"/><rect x="10.1" y="13" width="11" height="6" fill="#c8c6c4" stroke="#8a8886" stroke-width="1.3"/></svg>
<svg style="left:2070.3px;top:318.4px;" width="25.8" height="25.8" viewBox="0 0 25 25"><path d="M1 0V23H24" fill="none" stroke="#323130" stroke-width="1.7" /><rect x="5" y="15.5" width="5.5" height="7.5" fill="#fafafa" stroke="#323130" stroke-width="1.2"/><rect x="5" y="7" width="5.5" height="8.5" fill="#83beec" stroke="#0f6cbd" stroke-width="1.3"/><rect x="15" y="13.5" width="5.5" height="9.5" fill="#fafafa" stroke="#323130" stroke-width="1.2"/><rect x="15" y="4" width="5.5" height="9.5" fill="#c8c6c4" stroke="#8a8886" stroke-width="1.3"/></svg>
<svg style="left:2112.3px;top:318.4px;" width="25.8" height="25.8" viewBox="0 0 25 25"><path d="M1 0V23" fill="none" stroke="#323130" stroke-width="1.5" /><rect x="1.6" y="1.2" width="21.5" height="4.6" fill="#83beec" stroke="#0f6cbd" stroke-width="1.3"/><rect x="1.6" y="8.5" width="10" height="4.2" fill="#c8c6c4" stroke="#8a8886" stroke-width="1.2"/><rect x="1.6" y="15.5" width="16" height="4.6" fill="#fafafa" stroke="#323130" stroke-width="1.2"/><path d="M1 22.6H24" fill="none" stroke="#8a8886" stroke-width="1.2" /></svg>
<svg style="left:2154.3px;top:318.4px;" width="25.8" height="25.8" viewBox="0 0 25 25"><path d="M1 0V23" fill="none" stroke="#323130" stroke-width="1.5" /><rect x="2" y="1" width="5" height="22" fill="#83beec" stroke="#0f6cbd" stroke-width="1.4"/><rect x="7.7" y="9" width="4.5" height="14" fill="#fafafa" stroke="#323130" stroke-width="1.2"/><rect x="12.8" y="13" width="4.5" height="10" fill="#c8c6c4" stroke="#8a8886" stroke-width="1.2"/><rect x="18" y="7" width="4.7" height="16" fill="#fafafa" stroke="#323130" stroke-width="1.2"/><path d="M1 23H24" fill="none" stroke="#323130" stroke-width="1.4" /></svg>
<svg style="left:2196.3px;top:318.4px;" width="25.8" height="25.8" viewBox="0 0 25 25"><path d="M1 0V23H24" fill="none" stroke="#323130" stroke-width="1.7" /><rect x="1.6" y="3" width="6" height="6" fill="#fafafa" stroke="#323130" stroke-width="1.2"/><rect x="7.6" y="3" width="14" height="6" fill="#83beec" stroke="#0f6cbd" stroke-width="1.3"/><rect x="1.6" y="13" width="12" height="6" fill="#fafafa" stroke="#323130" stroke-width="1.2"/><rect x="13.6" y="13" width="8" height="6" fill="#c8c6c4" stroke="#8a8886" stroke-width="1.3"/></svg>
<svg style="left:2238.3px;top:318.4px;" width="25.8" height="25.8" viewBox="0 0 25 25"><path d="M1 0V23H24" fill="none" stroke="#323130" stroke-width="1.7" /><rect x="5" y="16" width="5.5" height="7" fill="#fafafa" stroke="#323130" stroke-width="1.2"/><rect x="5" y="3" width="5.5" height="13" fill="#83beec" stroke="#0f6cbd" stroke-width="1.3"/><rect x="15" y="10.5" width="5.5" height="12.5" fill="#fafafa" stroke="#323130" stroke-width="1.2"/><rect x="15" y="3" width="5.5" height="7.5" fill="#c8c6c4" stroke="#8a8886" stroke-width="1.3"/></svg>
<svg style="left:2028.3px;top:354.2px;" width="25.8" height="25.8" viewBox="0 0 25 25"><path d="M1 0V23H24" fill="none" stroke="#323130" stroke-width="1.7" /><path d="M2 18.6L15.4 4.7L23.6 12.9" fill="none" stroke="#0f6cbd" stroke-width="1.5" /><path d="M2 13.2L9.4 6.2L15.7 12.9L23.6 5.2" fill="none" stroke="#323130" stroke-width="1.4" /></svg>
<svg style="left:2070.3px;top:354.2px;" width="25.8" height="25.8" viewBox="0 0 25 25"><path d="M13.9 10.2L18.5 1.3L23.4 10.5V23.3Z" fill="#c8c6c4" stroke="#8a8886" stroke-width="1.2" /><path d="M0.8 14.7L8.2 2.5L13.9 10.2L6.7 20.3Z" fill="#fafafa" stroke="#323130" stroke-width="1.3" /><path d="M0.8 23.2V14.7L6.7 20.3L13.9 10.2L23.4 23.2Z" fill="#83beec" stroke="#0f6cbd" stroke-width="1.5" /></svg>
<svg style="left:2112.3px;top:354.2px;" width="25.8" height="25.8" viewBox="0 0 25 25"><path d="M1.5 4L7.5 11.5L17 3.5L23.5 8V16L17 11.5L7.5 19.5L1.5 13Z" fill="#83beec" stroke="#0f6cbd" stroke-width="1.4" /><path d="M1.5 13L7.5 19.5L17 11.5L23.5 16V22.5H1.5Z" fill="#fafafa" stroke="none" stroke-width="0" /><path d="M1 0V23H24" fill="none" stroke="#323130" stroke-width="1.7" /></svg>
<svg style="left:2154.3px;top:354.2px;" width="25.8" height="25.8" viewBox="0 0 25 25"><path d="M1 0V23H24" fill="none" stroke="#323130" stroke-width="1.7" /><rect x="5" y="15" width="5" height="8" fill="#fafafa" stroke="#323130" stroke-width="1.2"/><rect x="5" y="3.5" width="5" height="11.5" fill="#83beec" stroke="#0f6cbd" stroke-width="1.3"/><rect x="15" y="11" width="5" height="12" fill="#fafafa" stroke="#323130" stroke-width="1.2"/><rect x="15" y="4" width="5" height="7" fill="#c8c6c4" stroke="#8a8886" stroke-width="1.3"/><path d="M1.5 21L8 14L14 18.5L23.5 9" fill="none" stroke="#323130" stroke-width="1.4" /></svg>
<svg style="left:2196.3px;top:354.2px;" width="25.8" height="25.8" viewBox="0 0 25 25"><path d="M1 0V23H24" fill="none" stroke="#323130" stroke-width="1.7" /><rect x="4" y="10.5" width="4.5" height="12.5" fill="#83beec" stroke="#0f6cbd" stroke-width="1.3"/><rect x="10" y="2.5" width="4.5" height="20.5" fill="#fafafa" stroke="#323130" stroke-width="1.2"/><rect x="16" y="7" width="4.5" height="16" fill="#c8c6c4" stroke="#8a8886" stroke-width="1.2"/><path d="M1.5 21L8 13.5L14 18L23.5 8" fill="none" stroke="#323130" stroke-width="1.4" /></svg>
<svg style="left:2238.3px;top:354.2px;" width="25.8" height="25.8" viewBox="0 0 25 25"><path d="M2 5Q6 5 8.5 8Q12 12 15 8Q18 4 23 4V8.5Q18 9 15.5 12.5Q12 17 8.5 12.5Q6 9.5 2 9.5Z" fill="#c8c6c4" stroke="#8a8886" stroke-width="1.2" /><path d="M2 16H23" fill="none" stroke="#e07c00" stroke-width="4.2" stroke-dasharray="4.5 2"/><path d="M2 11Q6 11 8.5 15Q12 20 15 15Q18 10 23 10V14Q18 14 15.5 18Q12 22 8.5 18Q6 15 2 15Z" fill="#83beec" stroke="#0f6cbd" stroke-width="1.3" /><path d="M1 0V23H24" fill="none" stroke="#323130" stroke-width="1.7" /></svg>
<svg style="left:2028.3px;top:390.1px;" width="25.8" height="25.8" viewBox="0 0 25 25"><path d="M1 0V23H24" fill="none" stroke="#323130" stroke-width="1.7" /><rect x="3.3" y="8" width="3.5" height="15" fill="#fafafa" stroke="#323130" stroke-width="1.2"/><rect x="8" y="8" width="3.5" height="6.5" fill="#8a8886" stroke="#8a8886" stroke-width="1"/><rect x="12.5" y="2" width="3.5" height="12.5" fill="#0f6cbd" stroke="#0f6cbd" stroke-width="1"/><rect x="17.3" y="3" width="4" height="20" fill="#fafafa" stroke="#323130" stroke-width="1.2"/><path d="M6.8 8H8M11.5 14.5H12.5M16 2.6H19" fill="none" stroke="#323130" stroke-width="1.5" /></svg>
<svg style="left:2070.3px;top:390.1px;" width="25.8" height="25.8" viewBox="0 0 25 25"><rect x="1.2" y="1.5" width="21.6" height="5.5" fill="#83beec" stroke="#0f6cbd" stroke-width="1.4"/><rect x="4.2" y="7" width="15.6" height="5.2" fill="#83beec" stroke="#0f6cbd" stroke-width="1.4"/><rect x="6.5" y="12.2" width="11" height="5.3" fill="#83beec" stroke="#0f6cbd" stroke-width="1.4"/><rect x="8.6" y="17.5" width="6.8" height="5.2" fill="#83beec" stroke="#0f6cbd" stroke-width="1.4"/></svg>
<svg style="left:2112.3px;top:390.1px;" width="25.8" height="25.8" viewBox="0 0 25 25"><rect x="-3.8" y="-3.6" width="32.5" height="31.5" fill="#c8c6c4" stroke="#605e5c" stroke-width="1"/><rect x="-2.2" y="-2" width="29.3" height="28.3" fill="none" stroke="#8a8886" stroke-width="0.8"/><path d="M1 0V23H24" fill="none" stroke="#323130" stroke-width="1.7" /><rect x="17.3" y="2" width="3.6" height="3.6" fill="#323130" stroke="#323130" stroke-width="0"/><rect x="4.5" y="5.5" width="3.6" height="3.6" fill="#83beec" stroke="#0f6cbd" stroke-width="0.6"/><rect x="11" y="9.5" width="3.6" height="3.6" fill="#83beec" stroke="#0f6cbd" stroke-width="0.6"/><rect x="17.5" y="15" width="3.6" height="3.6" fill="#83beec" stroke="#0f6cbd" stroke-width="0.6"/><rect x="4.3" y="16" width="3.8" height="3.8" fill="#323130" stroke="#323130" stroke-width="0"/></svg>
<svg style="left:2154.3px;top:390.1px;" width="25.8" height="25.8" viewBox="0 0 25 25"><circle cx="12.5" cy="12.5" r="11" fill="#fafafa" stroke="#323130" stroke-width="1.5"/><path d="M12.5 12.5V1.5A11 11 0 0 1 21.2 19.2Z" fill="#83beec" stroke="#0f6cbd" stroke-width="1.4" /></svg>
<svg style="left:2196.3px;top:390.1px;" width="25.8" height="25.8" viewBox="0 0 25 25"><circle cx="12.5" cy="12.5" r="8.3" fill="none" stroke="#83beec" stroke-width="5.2"/><circle cx="12.5" cy="12.5" r="11" fill="none" stroke="#0f6cbd" stroke-width="1.4"/><circle cx="12.5" cy="12.5" r="5.6" fill="none" stroke="#0f6cbd" stroke-width="1.4"/><path d="M12.5 1.5A11 11 0 0 0 1.6 13.5H7A5.6 5.6 0 0 1 12.5 7Z" fill="#fafafa" stroke="#8a8886" stroke-width="1.2" /></svg>
<svg style="left:2238.3px;top:390.1px;" width="25.8" height="25.8" viewBox="0 0 25 25"><rect x="1.2" y="1.2" width="11.3" height="10.8" fill="#83beec" stroke="#0f6cbd" stroke-width="1.5"/><rect x="1.2" y="12" width="11.3" height="10.8" fill="#83beec" stroke="#0f6cbd" stroke-width="1.5"/><rect x="12.5" y="1.2" width="10.3" height="6.8" fill="#fafafa" stroke="#323130" stroke-width="1.3"/><rect x="12.5" y="8" width="4.8" height="14.8" fill="#fafafa" stroke="#323130" stroke-width="1.3"/><rect x="17.3" y="8" width="5.5" height="7.4" fill="#fafafa" stroke="#323130" stroke-width="1.3"/><rect x="17.3" y="15.4" width="5.5" height="7.4" fill="#fafafa" stroke="#323130" stroke-width="1.3"/></svg>
<svg style="left:2028.3px;top:425.9px;" width="25.8" height="25.8" viewBox="0 0 25 25"><circle cx="12.8" cy="10.8" r="8.2" fill="#fff" stroke="#323130" stroke-width="1.2"/><path d="M7.2 6.5Q10 3.5 12.5 4.5L11.5 9L8 11.5Q5.8 9.5 7.2 6.5ZM14.5 4.2L18 3.8Q21 7 20.5 10.5L17 8ZM10.5 13.5L16 13L17.5 17.5Q14.5 19.5 12 18.5Z" fill="#2e9a4c" stroke="none" stroke-width="0" /><path d="M10.5 0.8A10.8 10.8 0 0 0 20.5 19.8" fill="none" stroke="#323130" stroke-width="1.6" /><path d="M12.5 21.5V23.3M3.5 23.6H21.5" fill="none" stroke="#323130" stroke-width="1.9" /></svg>
<svg style="left:2070.3px;top:425.9px;" width="25.8" height="25.8" viewBox="0 0 25 25"><path d="M1.5 2.5L8 2L10 5.5L9.5 9.5L12 11L10.5 14H2.5L3.5 8.5Z" fill="#83beec" stroke="#0f6cbd" stroke-width="1.4" /><path d="M10 5.5L13.5 4.5L17.5 2H23V10.5L12 11L9.5 9.5Z" fill="#c8c6c4" stroke="#323130" stroke-width="1.2" /><path d="M2.5 14H10.5L11.5 19.5L10.5 22.5L6 20L2 15.5Z" fill="#c8c6c4" stroke="#323130" stroke-width="1.2" /><path d="M12 11L23 10.5V14Q22 19 17 21L14 21.5L11.5 19.5L10.5 14Z" fill="#83beec" stroke="#0f6cbd" stroke-width="1.4" /></svg>
<svg style="left:2112.3px;top:425.9px;" width="25.8" height="25.8" viewBox="0 0 25 25"><path d="M17.6 -0.6L2.2 24L14.8 19.4Z" fill="#3999c6" stroke="none" stroke-width="0" /><path d="M17.6 -0.6L23.8 25.2L14.8 19.4Z" fill="#59b4d9" stroke="none" stroke-width="0" /><path d="M14.8 19.4L23.8 25.2L20 13.5Z" fill="#0078d4" stroke="none" stroke-width="0" /></svg>
<svg style="left:2154.3px;top:425.9px;" width="25.8" height="25.8" viewBox="0 0 25 25"><path d="M1 18A11.5 11.5 0 0 1 24 18H19A6.5 6.5 0 0 0 6 18Z" fill="#fafafa" stroke="#323130" stroke-width="1.5" /><path d="M8.5 8.5A11.5 11.5 0 0 1 24 18H19A6.5 6.5 0 0 0 10.8 12.5Z" fill="#83beec" stroke="#0f6cbd" stroke-width="1.4" /><path d="M12 17L18 11" fill="none" stroke="#323130" stroke-width="1.4" /><circle cx="12.3" cy="16.7" r="1.9" fill="#323130"/></svg>
<svg style="left:2196.3px;top:425.9px;" width="25.8" height="25.8" viewBox="0 0 25 25"><rect x="1" y="4" width="22.5" height="17" fill="#fafafa" stroke="#323130" stroke-width="1.7"/><path d="M4 19H21" fill="none" stroke="#8a8886" stroke-width="1" /><text x="12.3" y="16.3" font-family="Liberation Sans" font-size="11.5" fill="#2b88d8" text-anchor="middle" letter-spacing="-0.6">123</text></svg>
<svg style="left:2238.3px;top:425.9px;" width="25.8" height="25.8" viewBox="0 0 25 25"><rect x="1" y="1" width="22.5" height="22.5" fill="#fafafa" stroke="#323130" stroke-width="1.7"/><path d="M5.3 4.5V20" fill="none" stroke="#8a8886" stroke-width="1.3" /><path d="M7.5 7.5H20M7.5 15H20" fill="none" stroke="#0f6cbd" stroke-width="2" /><path d="M7.5 10.6H14M7.5 18.3H14" fill="none" stroke="#8a8886" stroke-width="1.1" /></svg>
<svg style="left:2028.3px;top:461.7px;" width="25.8" height="25.8" viewBox="0 0 25 25"><rect x="1" y="3.5" width="22.5" height="18" fill="#fafafa" stroke="#323130" stroke-width="1.7"/><path d="M4 12L8 5.5L12 12Z" fill="#7cc68d" stroke="#2e9a4c" stroke-width="1.3" /><path d="M13.5 6H21L17.2 12.5Z" fill="#f5a3a8" stroke="#d13438" stroke-width="1.3" /><path d="M4 17H21" fill="none" stroke="#8a8886" stroke-width="1.2" /></svg>
<svg style="left:2070.3px;top:461.7px;" width="25.8" height="25.8" viewBox="0 0 25 25"><rect x="1" y="1" width="22.5" height="22" fill="#fafafa" stroke="#323130" stroke-width="1.3"/><rect x="1.8" y="1.8" width="21" height="3.2" fill="#c8c6c4"/><path d="M1 5.5H23.5" fill="none" stroke="#323130" stroke-width="1.2" /><rect x="1" y="1" width="22.5" height="22" fill="none" stroke="#323130" stroke-width="1.7"/><rect x="5.2" y="9.3" width="3.6" height="3.6" fill="#c8c6c4" stroke="#8a8886" stroke-width="1"/><rect x="5.2" y="16" width="3.6" height="3.6" fill="#c8c6c4" stroke="#8a8886" stroke-width="1"/><path d="M12.5 13H25L20.5 18.5V25H17V18.5Z" fill="#fafafa" stroke="#323130" stroke-width="1.4" /></svg>
<svg style="left:2112.3px;top:461.7px;" width="25.8" height="25.8" viewBox="0 0 25 25"><rect x="1" y="1" width="22" height="22" fill="#fafafa" stroke="#323130" stroke-width="1.7"/><rect x="1.8" y="1.8" width="20.4" height="3.6" fill="#c8c6c4"/><path d="M1 6H23" fill="none" stroke="#323130" stroke-width="1.2" /><path d="M1 11.5H23M1 17H23M8.3 6V23M15.6 6V23" fill="none" stroke="#8a8886" stroke-width="1.2" /><rect x="1" y="1" width="22" height="22" fill="none" stroke="#323130" stroke-width="1.7"/></svg>
<svg style="left:2154.3px;top:461.7px;" width="25.8" height="25.8" viewBox="0 0 25 25"><rect x="1" y="1" width="22" height="22" fill="#fafafa" stroke="#323130" stroke-width="1.7"/><rect x="1.8" y="1.8" width="20.4" height="3.6" fill="#c8c6c4"/><rect x="15.6" y="6" width="7.4" height="17" fill="#83beec"/><rect x="1" y="17" width="22" height="6" fill="#83beec"/><path d="M1 6H23" fill="none" stroke="#323130" stroke-width="1.2" /><path d="M1 11.5H23M1 17H23M8.3 6V23M15.6 6V23" fill="none" stroke="#8a8886" stroke-width="1.2" /><rect x="1" y="1" width="22" height="22" fill="none" stroke="#323130" stroke-width="1.7"/><path d="M1 17H23M15.6 6V23" fill="none" stroke="#0f6cbd" stroke-width="1.4" /></svg>
<svg style="left:2196.3px;top:461.7px;" width="25.8" height="25.8" viewBox="0 0 25 25"><text x="0" y="0" transform="translate(5.6 20.6) scale(0.8 1)" font-family="Liberation Sans" font-weight="700" font-size="23" fill="#1a86d0">R</text></svg>
<svg style="left:2238.3px;top:461.7px;" width="25.8" height="25.8" viewBox="0 0 25 25"><text x="0" y="0" transform="translate(-0.8 17.3) scale(0.92 1)" font-family="Liberation Sans" font-weight="700" font-size="22.6" fill="#1a86d0" letter-spacing="-0.6">Py</text></svg>
<svg style="left:2028.3px;top:497.5px;" width="25.8" height="25.8" viewBox="0 0 25 25"><path d="M1 0V23H24" fill="none" stroke="#323130" stroke-width="1.7" /><path d="M1.5 5.5H18" fill="none" stroke="#0f6cbd" stroke-width="1.5" /><circle cx="19.8" cy="5.3" r="2.7" fill="#83beec" stroke="#0f6cbd" stroke-width="1.3"/><path d="M1.5 11.5H13M1.5 16.8H8.5" fill="none" stroke="#8a8886" stroke-width="1.3" /><circle cx="14.5" cy="11.5" r="1.7" fill="#c8c6c4" stroke="#8a8886" stroke-width="1"/><circle cx="9.5" cy="16.8" r="1.7" fill="#c8c6c4" stroke="#8a8886" stroke-width="1"/></svg>
<svg style="left:2070.3px;top:497.5px;" width="25.8" height="25.8" viewBox="0 0 25 25"><path d="M10 11.5H13V3.5H16M13 11.5V20H16M13 11.5H16" fill="none" stroke="#323130" stroke-width="1.4" /><rect x="1" y="8.5" width="8.5" height="6" fill="#83beec" stroke="#0f6cbd" stroke-width="1.4"/><rect x="15.5" y="0.8" width="8" height="5.2" fill="#83beec" stroke="#0f6cbd" stroke-width="1.4"/><rect x="15.5" y="9" width="8" height="5.2" fill="#83beec" stroke="#0f6cbd" stroke-width="1.4"/><rect x="15.5" y="17.2" width="8" height="5.2" fill="#83beec" stroke="#0f6cbd" stroke-width="1.4"/></svg>
<svg style="left:2112.3px;top:497.5px;" width="25.8" height="25.8" viewBox="0 0 25 25"><path d="M1.2 2.5H23.5V17.3H10.5L5 22.5V17.3H1.2Z" fill="#fafafa" stroke="#0f6cbd" stroke-width="1.6" /></svg>
<svg style="left:2154.3px;top:497.5px;" width="25.8" height="25.8" viewBox="0 0 25 25"><path d="M3.5 1.5H15L19.5 6V23.5H3.5V12M3.5 5.5V1.5" fill="#fafafa" stroke="#323130" stroke-width="1.5" /><path d="M15 1.5V6H19.5" fill="none" stroke="#323130" stroke-width="1.2" /><circle cx="3.8" cy="8.8" r="2.2" fill="#83beec" stroke="#0f6cbd" stroke-width="1.2"/><path d="M9 11H16.5M7 15.5H14" fill="none" stroke="#4ba0e0" stroke-width="1.3" /></svg>
<svg style="left:2196.3px;top:497.5px;" width="25.8" height="25.8" viewBox="0 0 25 25"><path d="M2 1H14.5L20.5 7V24H2Z" fill="#fafafa" stroke="#323130" stroke-width="1.6" /><path d="M14.5 1V7H20.5" fill="none" stroke="#323130" stroke-width="1.3" /><rect x="6" y="15" width="2.6" height="6.5" fill="#323130" stroke="#323130" stroke-width="0"/><rect x="11" y="18" width="2.6" height="3.5" fill="#323130" stroke="#323130" stroke-width="0"/><rect x="16" y="12" width="2.6" height="9.5" fill="#323130" stroke="#323130" stroke-width="0"/></svg>
<svg style="left:2238.3px;top:497.5px;" width="25.8" height="25.8" viewBox="0 0 25 25"><path d="M9 1.5H23V9Q18 6 17 9.5Q16 13 12.5 14.5Q14.5 18 14 22H2V13" fill="#83beec" stroke="none" stroke-width="0" /><path d="M9 1.5H23V14M16 23H2V12" fill="none" stroke="#0f6cbd" stroke-width="1.7" /><path d="M12 13Q13 9 16 8.5Q17 5 21.5 6.5V8Q19 8.5 18 11Q17 14.5 14 15.5Q15.5 19 14.5 21.5H10.5Q12.5 18 12 13Z" fill="#83beec" stroke="#0f6cbd" stroke-width="0.8" /><path d="M0.8 2.2Q0.8 0.5 2.5 0.5H6.5Q8.2 0.5 8.2 2.2V9.5L4.5 13L0.8 9.5Z" fill="#e07c00" stroke="#d86a0a" stroke-width="0.8" /><circle cx="4.5" cy="4.8" r="1.6" fill="#fff"/><circle cx="21" cy="21" r="3.1" fill="#d86a0a"/><circle cx="23.5" cy="14.5" r="1.7" fill="#d86a0a"/></svg>
<svg style="left:2028.3px;top:533.4px;" width="25.8" height="25.8" viewBox="0 0 25 25"><path d="M8 1.2L0.8 11.8L8 22.4H10.5L17.6 11.8L10.5 1.2Z" fill="#fafafa" stroke="#9a2ca0" stroke-width="1.5" stroke-linejoin="round"/><path d="M14.6 1.2L7.4 11.8L14.6 22.4H17.2L24.4 11.8L17.2 1.2Z" fill="none" stroke="#9a2ca0" stroke-width="1.5" stroke-linejoin="round"/></svg>
<svg style="left:2070.3px;top:533.4px;" width="25.8" height="25.8" viewBox="0 0 25 25"><path d="M2 1.5H16.5L24.5 11.3L16.5 21H2L9.8 11.3Z" fill="#fafafa" stroke="#0f7ae0" stroke-width="1.6" stroke-linejoin="round"/><path d="M9.8 20.8L18.2 10.8M15 20.8L21.5 13" fill="none" stroke="#0f7ae0" stroke-width="1.4" /></svg>
<svg style="left:2112.3px;top:533.4px;" width="25.8" height="25.8" viewBox="0 0 25 25"><circle cx="3.3" cy="9" r="1.35" fill="#201f1e"/><circle cx="12.2" cy="9" r="1.35" fill="#201f1e"/><circle cx="21.2" cy="9" r="1.35" fill="#201f1e"/></svg>
<div class="a" style="left:2019px;top:564px;width:271px;height:1px;background:#e1dfdd;"></div>
<svg style="left:2040px;top:570px;" width="170" height="45" viewBox="2040 570 170 45"><path d="M2053 578.5H2077" stroke="#323130" stroke-width="1.5"/><rect x="2054" y="583.3" width="28.5" height="8.6" fill="none" stroke="#323130" stroke-width="1.5" stroke-dasharray="3 1.6"/><rect x="2054" y="597" width="28.5" height="8.6" fill="none" stroke="#323130" stroke-width="1.5" stroke-dasharray="3 1.6"/><rect x="2115" y="578.5" width="21.5" height="6.5" rx="1" fill="none" stroke="#323130" stroke-width="1.7"/><path d="M2136.5 581.5H2141V590H2127.5V596" fill="none" stroke="#323130" stroke-width="1.7"/><rect x="2124.3" y="596" width="6.4" height="11.5" fill="none" stroke="#323130" stroke-width="1.7"/><circle cx="2185.5" cy="590.8" r="12" fill="none" stroke="#323130" stroke-width="1.6"/><path d="M2194 600.5L2202.5 609" stroke="#323130" stroke-width="1.8"/><path d="M2173.5 591.5L2179.5 588L2184.5 592.5L2196.5 583.5" fill="none" stroke="#323130" stroke-width="1.5"/><path d="M2178 595V602M2182.5 597V603.3M2187 595.5V603.3M2191.5 592.5V602" stroke="#323130" stroke-width="1.5"/></svg>
<div class="a" style="left:2038px;top:614px;width:60px;height:5.5px;background:#f2c811;border-radius:3px;"></div>
<div class="a" style="left:2281.4px;top:618px;width:8.6px;height:665px;background:#cdcbc9;border-radius:4px;"></div>
<div class="t" style="left:2037.8px;top:632px;font-size:17.5px;letter-spacing:-0.12px;color:#252423;">Details</div>
<div class="a" style="left:2026px;top:660px;width:255px;height:41.39999999999998px;background:#ffffff;border:1px dashed #c8c6c4;"></div>
<div class="t" style="left:2042.5px;top:674px;font-size:17.5px;letter-spacing:0.19px;color:#252423;">Add data fields here</div>
<div class="t" style="left:2037.8px;top:722px;font-size:17.5px;letter-spacing:-0.12px;color:#252423;">Legend</div>
<div class="a" style="left:2026px;top:750px;width:255px;height:45px;background:#ffffff;border:1px dashed #c8c6c4;"></div>
<div class="a" style="left:2030px;top:756px;width:246px;height:34px;background:#edebe9;border:1px solid #bab8b6;border-radius:3px;"></div>
<svg style="left:2038px;top:767.4px;" width="13.8" height="13.11" viewBox="0 0 100 95"><polygon points="50.0,2.6 61.8,36.4 97.6,37.1 69.0,58.8 79.4,93.1 50.0,72.6 20.6,93.1 31.0,58.8 2.4,37.1 38.2,36.4" fill="#252423"/></svg>
<div class="t" style="left:2053.9px;top:766px;font-size:17.5px;letter-spacing:0.09px;color:#252423;">Industry</div>
<svg style="left:2229.4px;top:768px;" width="18" height="10.5" viewBox="0 0 18 10.5"><path d="M0.6 0.8L9 9.5L17.4 0.8" fill="none" stroke="#323130" stroke-width="1.4"/></svg>
<svg style="left:2256.4px;top:767.4px;" width="12.6" height="12.2" viewBox="0 0 12.6 12.2"><path d="M0.6 0.6L12 11.6M12 0.6L0.6 11.6" fill="none" stroke="#323130" stroke-width="1.4"/></svg>
<div class="t" style="left:2037.8px;top:815px;font-size:17.5px;letter-spacing:-0.41px;color:#252423;">X Axis</div>
<div class="a" style="left:2026px;top:843.3px;width:255px;height:41.10000000000002px;background:#ffffff;border:1px dashed #c8c6c4;"></div>
<div class="t" style="left:2042.5px;top:857px;font-size:17.5px;letter-spacing:0.19px;color:#252423;">Add data fields here</div>
<div class="t" style="left:2037.8px;top:905px;font-size:17.5px;letter-spacing:-0.50px;color:#252423;">Y Axis</div>
<div class="a" style="left:2026px;top:933.3px;width:255px;height:41.10000000000002px;background:#ffffff;border:1px dashed #c8c6c4;"></div>
<div class="t" style="left:2042.5px;top:947px;font-size:17.5px;letter-spacing:0.19px;color:#252423;">Add data fields here</div>
<div class="t" style="left:2037.8px;top:995px;font-size:17.5px;letter-spacing:-1.45px;color:#252423;">Size</div>
<div class="a" style="left:2026px;top:1023.3px;width:255px;height:41.100000000000136px;background:#ffffff;border:1px dashed #c8c6c4;"></div>
<div class="t" style="left:2042.5px;top:1037px;font-size:17.5px;letter-spacing:0.19px;color:#252423;">Add data fields here</div>
<div class="t" style="left:2037.8px;top:1085px;font-size:17.5px;letter-spacing:-0.29px;color:#252423;">Play Axis</div>
<div class="a" style="left:2026px;top:1113.3px;width:255px;height:41.100000000000136px;background:#ffffff;border:1px dashed #c8c6c4;"></div>
<div class="t" style="left:2042.5px;top:1127px;font-size:17.5px;letter-spacing:0.19px;color:#252423;">Add data fields here</div>
<div class="t" style="left:2037.8px;top:1175px;font-size:17.5px;letter-spacing:0.27px;color:#252423;">Tooltips</div>
<div class="a" style="left:2026px;top:1203.3px;width:255px;height:41.100000000000136px;background:#ffffff;border:1px dashed #c8c6c4;"></div>
<div class="t" style="left:2042.5px;top:1217px;font-size:17.5px;letter-spacing:0.19px;color:#252423;">Add data fields here</div>
<div class="t" style="left:2041.8px;top:1270px;font-size:24px;letter-spacing:0.65px;color:#3b3a39;-webkit-text-stroke:0.8px #3b3a39;">Drill through</div>
<div class="t" style="left:2033.3px;top:1322px;font-size:17.5px;letter-spacing:0.15px;color:#252423;">Cross-report</div>
<div class="t" style="left:2047.0px;top:1366px;font-size:17.5px;letter-spacing:0.47px;color:#252423;">Off</div>
<svg style="left:2075px;top:1363px;" width="50" height="22" viewBox="2075 1363 50 22"><rect x="2092" y="1373.2" width="29.6" height="2.6" rx="1.3" fill="#f3f2f1" stroke="#605e5c" stroke-width="0.9"/><circle cx="2085.9" cy="1373.9" r="7.4" fill="#f3f2f1" stroke="#605e5c" stroke-width="2.8"/></svg>
</div>
</div>
<!-- FIELDS PANE -->
<div id="fields" class="a">
<div class="a" style="left:-2291px;top:-240px"><div class="t" style="left:2310.0px;top:267px;font-size:23.3px;letter-spacing:-0.33px;color:#3b3a39;-webkit-text-stroke:0.5px #3b3a39;">Fields</div>
<svg style="left:2532.5px;top:264px;" width="10" height="17" viewBox="0 0 10 17"><path d="M1 0.8L8.8 8.5L1 16.2" fill="none" stroke="#252423" stroke-width="1.5"/></svg>
<div class="a" style="left:2297px;top:312px;width:258px;height:40px;background:#ffffff;border:1px solid #605e5c;border-radius:3px;"></div>
<svg style="left:2308.5px;top:321px;" width="22" height="22" viewBox="0 0 22 22"><circle cx="13.8" cy="8" r="6.6" fill="none" stroke="#323130" stroke-width="1.4"/><path d="M9 12.8L0.8 21" stroke="#323130" stroke-width="1.4"/></svg>
<div class="t" style="left:2341.4px;top:324px;font-size:20.6px;letter-spacing:-1.13px;color:#504e4c;">Search</div>
<div class="a" style="left:2291px;top:361px;width:269px;height:1px;background:#e1dfdd;"></div>
<div class="a" style="left:2543px;top:375.5px;width:11.8px;height:490px;background:#c8c6c4;"></div>
<svg style="left:2302px;top:389.5px;" width="17" height="10" viewBox="0 0 17 10"><path d="M0.6 0.7L8.5 8.8L16.4 0.7" fill="none" stroke="#323130" stroke-width="1.3"/></svg>
<svg style="left:2323.7px;top:385.0px;" width="20" height="18" viewBox="0 0 20 18"><rect x="0.8" y="0.8" width="18" height="16" fill="none" stroke="#323130" stroke-width="1.6"/><path d="M0.8 4.3H18.8M0.8 8.6H18.8M0.8 12.7H18.8M6.8 4.3V16.8M12.8 4.3V16.8" stroke="#323130" stroke-width="1.3"/><path d="M0.8 2.5H18.8" stroke="#323130" stroke-width="1.8"/></svg>
<div class="a" style="left:2335px;top:393.7px;width:18px;height:18px;background:#f2c811;border-radius:50%;"></div>
<svg style="left:2339.5px;top:399.7px;" width="9" height="7" viewBox="0 0 9 7"><path d="M0.8 3.4L3.3 5.8L8.2 0.9" fill="none" stroke="#201f1e" stroke-width="1.7"/></svg>
<svg style="left:2353.6px;top:388.4px;" width="12.9" height="12.254999999999999" viewBox="0 0 100 95"><polygon points="50.0,2.6 61.8,36.4 97.6,37.1 69.0,58.8 79.4,93.1 50.0,72.6 20.6,93.1 31.0,58.8 2.4,37.1 38.2,36.4" fill="#252423"/></svg>
<div class="t" style="left:2373.0px;top:387px;font-size:17.5px;letter-spacing:0.02px;color:#252423;">Industries</div>
<div class="a" style="left:2348px;top:421.0px;width:18px;height:18px;background:#f2c811;border-radius:3px;"></div>
<svg style="left:2351px;top:425.5px;" width="12" height="9" viewBox="0 0 12 9"><path d="M0.8 4.5L4.2 7.8L11.2 0.8" fill="none" stroke="#323130" stroke-width="1.3"/></svg>
<svg style="left:2405.8px;top:424.4px;" width="12.9" height="12.254999999999999" viewBox="0 0 100 95"><polygon points="50.0,2.6 61.8,36.4 97.6,37.1 69.0,58.8 79.4,93.1 50.0,72.6 20.6,93.1 31.0,58.8 2.4,37.1 38.2,36.4" fill="#252423"/></svg>
<div class="t" style="left:2419.5px;top:423px;font-size:17.5px;letter-spacing:0.32px;color:#252423;">Industry</div>
<div class="a" style="left:2522px;top:429.0px;width:2px;height:2px;background:#252423;border-radius:50%;"></div>
<div class="a" style="left:2528.4px;top:429.0px;width:2px;height:2px;background:#252423;border-radius:50%;"></div>
<div class="a" style="left:2534.8px;top:429.0px;width:2px;height:2px;background:#252423;border-radius:50%;"></div>
<div class="a" style="left:2348px;top:457.0px;width:18px;height:18px;border:1px solid #8a8886;border-radius:3.5px;"></div>
<div class="t" style="left:2405.8px;top:459px;font-size:17.5px;letter-spacing:-0.30px;color:#252423;">IndustryS...</div>
<svg style="left:2496.2px;top:459.0px;" width="19" height="15" viewBox="0 0 19 15"><path d="M0.4 7.8Q9.2 -6.6 18 7.8" fill="none" stroke="#605e5c" stroke-width="1.2"/><path d="M5.6 9.2A3.4 3.4 0 1 0 8 5.6" fill="none" stroke="#605e5c" stroke-width="1.2"/><path d="M1.3 0.4L15.8 14.6" stroke="#605e5c" stroke-width="1.2"/></svg>
<svg style="left:2306.5px;top:494.0px;" width="9" height="16" viewBox="0 0 9 16"><path d="M0.7 0.6L8 8L0.7 15.4" fill="none" stroke="#323130" stroke-width="1.3"/></svg>
<svg style="left:2323.7px;top:493.0px;" width="20" height="18" viewBox="0 0 20 18"><rect x="0.8" y="0.8" width="18" height="16" fill="none" stroke="#323130" stroke-width="1.6"/><path d="M0.8 4.3H18.8M0.8 8.6H18.8M0.8 12.7H18.8M6.8 4.3V16.8M12.8 4.3V16.8" stroke="#323130" stroke-width="1.3"/><path d="M0.8 2.5H18.8" stroke="#323130" stroke-width="1.8"/></svg>
<svg style="left:2353.6px;top:496.4px;" width="12.9" height="12.254999999999999" viewBox="0 0 100 95"><polygon points="50.0,2.6 61.8,36.4 97.6,37.1 69.0,58.8 79.4,93.1 50.0,72.6 20.6,93.1 31.0,58.8 2.4,37.1 38.2,36.4" fill="#252423"/></svg>
<div class="t" style="left:2373.0px;top:495px;font-size:17.5px;letter-spacing:0.32px;color:#252423;">Opportunity Owners</div>
<svg style="left:2302px;top:533.5px;" width="17" height="10" viewBox="0 0 17 10"><path d="M0.6 0.7L8.5 8.8L16.4 0.7" fill="none" stroke="#323130" stroke-width="1.3"/></svg>
<svg style="left:2323.7px;top:529.0px;" width="20" height="18" viewBox="0 0 20 18"><rect x="0.8" y="0.8" width="18" height="16" fill="none" stroke="#323130" stroke-width="1.6"/><path d="M0.8 4.3H18.8M0.8 8.6H18.8M0.8 12.7H18.8M6.8 4.3V16.8M12.8 4.3V16.8" stroke="#323130" stroke-width="1.3"/><path d="M0.8 2.5H18.8" stroke="#323130" stroke-width="1.8"/></svg>
<svg style="left:2353.6px;top:532.4px;" width="12.9" height="12.254999999999999" viewBox="0 0 100 95"><polygon points="50.0,2.6 61.8,36.4 97.6,37.1 69.0,58.8 79.4,93.1 50.0,72.6 20.6,93.1 31.0,58.8 2.4,37.1 38.2,36.4" fill="#252423"/></svg>
<div class="t" style="left:2373.0px;top:531px;font-size:17.5px;letter-spacing:-0.09px;color:#252423;">Products</div>
<div class="a" style="left:2348px;top:565.0px;width:18px;height:18px;border:1px solid #8a8886;border-radius:3.5px;"></div>
<svg style="left:2405.8px;top:568.4px;" width="12.9" height="12.254999999999999" viewBox="0 0 100 95"><polygon points="50.0,2.6 61.8,36.4 97.6,37.1 69.0,58.8 79.4,93.1 50.0,72.6 20.6,93.1 31.0,58.8 2.4,37.1 38.2,36.4" fill="#252423"/></svg>
<div class="t" style="left:2425.8px;top:567px;font-size:17.5px;letter-spacing:-0.66px;color:#252423;">Links</div>
<svg style="left:2496.2px;top:567.0px;" width="19" height="15" viewBox="0 0 19 15"><path d="M0.4 7.8Q9.2 -6.6 18 7.8" fill="none" stroke="#605e5c" stroke-width="1.2"/><path d="M5.6 9.2A3.4 3.4 0 1 0 8 5.6" fill="none" stroke="#605e5c" stroke-width="1.2"/><path d="M1.3 0.4L15.8 14.6" stroke="#605e5c" stroke-width="1.2"/></svg>
<div class="a" style="left:2348px;top:601.0px;width:18px;height:18px;border:1px solid #8a8886;border-radius:3.5px;"></div>
<svg style="left:2405.8px;top:604.4px;" width="12.9" height="12.254999999999999" viewBox="0 0 100 95"><polygon points="50.0,2.6 61.8,36.4 97.6,37.1 69.0,58.8 79.4,93.1 50.0,72.6 20.6,93.1 31.0,58.8 2.4,37.1 38.2,36.4" fill="#252423"/></svg>
<div class="t" style="left:2425.8px;top:603px;font-size:17.5px;letter-spacing:0.10px;color:#252423;">Product</div>
<div class="a" style="left:2348px;top:637.0px;width:18px;height:18px;border:1px solid #8a8886;border-radius:3.5px;"></div>
<svg style="left:2405.8px;top:640.4px;" width="12.9" height="12.254999999999999" viewBox="0 0 100 95"><polygon points="50.0,2.6 61.8,36.4 97.6,37.1 69.0,58.8 79.4,93.1 50.0,72.6 20.6,93.1 31.0,58.8 2.4,37.1 38.2,36.4" fill="#252423"/></svg>
<div class="t" style="left:2425.8px;top:639px;font-size:17.5px;letter-spacing:-0.18px;color:#252423;">Product Cate...</div>
<div class="a" style="left:2348px;top:673.0px;width:18px;height:18px;border:1px solid #8a8886;border-radius:3.5px;"></div>
<div class="t" style="left:2405.8px;top:675px;font-size:17.5px;letter-spacing:-0.27px;color:#252423;">ProductS...</div>
<svg style="left:2496.2px;top:675.0px;" width="19" height="15" viewBox="0 0 19 15"><path d="M0.4 7.8Q9.2 -6.6 18 7.8" fill="none" stroke="#605e5c" stroke-width="1.2"/><path d="M5.6 9.2A3.4 3.4 0 1 0 8 5.6" fill="none" stroke="#605e5c" stroke-width="1.2"/><path d="M1.3 0.4L15.8 14.6" stroke="#605e5c" stroke-width="1.2"/></svg>
<svg style="left:2306.5px;top:710.0px;" width="9" height="16" viewBox="0 0 9 16"><path d="M0.7 0.6L8 8L0.7 15.4" fill="none" stroke="#323130" stroke-width="1.3"/></svg>
<svg style="left:2323.7px;top:709.0px;" width="20" height="18" viewBox="0 0 20 18"><rect x="0.8" y="0.8" width="18" height="16" fill="none" stroke="#323130" stroke-width="1.6"/><path d="M0.8 4.3H18.8M0.8 8.6H18.8M0.8 12.7H18.8M6.8 4.3V16.8M12.8 4.3V16.8" stroke="#323130" stroke-width="1.3"/><path d="M0.8 2.5H18.8" stroke="#323130" stroke-width="1.8"/></svg>
<svg style="left:2353.6px;top:712.4px;" width="12.9" height="12.254999999999999" viewBox="0 0 100 95"><polygon points="50.0,2.6 61.8,36.4 97.6,37.1 69.0,58.8 79.4,93.1 50.0,72.6 20.6,93.1 31.0,58.8 2.4,37.1 38.2,36.4" fill="#252423"/></svg>
<div class="t" style="left:2367.5px;top:711px;font-size:17.5px;letter-spacing:-0.13px;color:#252423;">Campaigns</div>
<svg style="left:2306.5px;top:746.0px;" width="9" height="16" viewBox="0 0 9 16"><path d="M0.7 0.6L8 8L0.7 15.4" fill="none" stroke="#323130" stroke-width="1.3"/></svg>
<svg style="left:2323.7px;top:745.0px;" width="20" height="18" viewBox="0 0 20 18"><rect x="0.8" y="0.8" width="18" height="16" fill="none" stroke="#323130" stroke-width="1.6"/><path d="M0.8 4.3H18.8M0.8 8.6H18.8M0.8 12.7H18.8M6.8 4.3V16.8M12.8 4.3V16.8" stroke="#323130" stroke-width="1.3"/><path d="M0.8 2.5H18.8" stroke="#323130" stroke-width="1.8"/></svg>
<div class="t" style="left:2353.0px;top:747px;font-size:17.5px;letter-spacing:-0.04px;color:#252423;">Accounts</div>
<svg style="left:2302px;top:785.5px;" width="17" height="10" viewBox="0 0 17 10"><path d="M0.6 0.7L8.5 8.8L16.4 0.7" fill="none" stroke="#323130" stroke-width="1.3"/></svg>
<svg style="left:2323.7px;top:781.0px;" width="20" height="18" viewBox="0 0 20 18"><rect x="0.8" y="0.8" width="18" height="16" fill="none" stroke="#323130" stroke-width="1.6"/><path d="M0.8 4.3H18.8M0.8 8.6H18.8M0.8 12.7H18.8M6.8 4.3V16.8M12.8 4.3V16.8" stroke="#323130" stroke-width="1.3"/><path d="M0.8 2.5H18.8" stroke="#323130" stroke-width="1.8"/></svg>
<div class="t" style="left:2353.0px;top:783px;font-size:17.5px;letter-spacing:0.38px;color:#252423;">Opportunities</div>
<div class="a" style="left:2348px;top:817.0px;width:18px;height:18px;border:1px solid #8a8886;border-radius:3.5px;"></div>
<div class="t" style="left:2405.8px;top:819px;font-size:17.5px;letter-spacing:-0.33px;color:#252423;">AccountS...</div>
<svg style="left:2496.2px;top:819.0px;" width="19" height="15" viewBox="0 0 19 15"><path d="M0.4 7.8Q9.2 -6.6 18 7.8" fill="none" stroke="#605e5c" stroke-width="1.2"/><path d="M5.6 9.2A3.4 3.4 0 1 0 8 5.6" fill="none" stroke="#605e5c" stroke-width="1.2"/><path d="M1.3 0.4L15.8 14.6" stroke="#605e5c" stroke-width="1.2"/></svg>
<div class="a" style="left:2348px;top:853.0px;width:18px;height:18px;border:1px solid #8a8886;border-radius:3.5px;"></div>
<svg style="left:2378px;top:850.0px;" width="17" height="24" viewBox="0 0 17 24"><rect x="0.9" y="0.9" width="14.8" height="22" fill="none" stroke="#323130" stroke-width="1.8"/><rect x="3.8" y="4" width="9" height="3" fill="none" stroke="#323130" stroke-width="1.2"/><rect x="3.5" y="10.5" width="1.4" height="1.4" fill="#323130"/><rect x="7.9" y="10.5" width="1.4" height="1.4" fill="#323130"/><rect x="12.3" y="10.5" width="1.4" height="1.4" fill="#323130"/><rect x="3.5" y="15.0" width="1.4" height="1.4" fill="#323130"/><rect x="7.9" y="15.0" width="1.4" height="1.4" fill="#323130"/><rect x="12.3" y="15.0" width="1.4" height="1.4" fill="#323130"/><rect x="3.5" y="19.5" width="1.4" height="1.4" fill="#323130"/><rect x="7.9" y="19.5" width="1.4" height="1.4" fill="#323130"/><rect x="12.3" y="19.5" width="1.4" height="1.4" fill="#323130"/></svg>
<div class="t" style="left:2405.8px;top:855px;font-size:17.5px;letter-spacing:-0.36px;color:#252423;">AVG Days to Cl...</div>
<div class="a" style="left:2348px;top:889.0px;width:18px;height:18px;border:1px solid #8a8886;border-radius:3.5px;"></div>
<svg style="left:2376.3px;top:889.1px;" width="23" height="21" viewBox="0 0 23 21"><rect x="0.9" y="0.9" width="18.2" height="16.4" fill="none" stroke="#323130" stroke-width="1.8"/><path d="M0.9 3.7H19.1" stroke="#323130" stroke-width="1.5"/><path d="M6.6 3.7V17.3M12.9 3.7V17.3M6.6 8.3H19.1M6.6 12.8H19.1" stroke="#323130" stroke-width="1.4" fill="none"/><rect x="14.2" y="10.2" width="9" height="11" fill="#f3f2f1"/><path d="M22.3 11.2H15.8L19.3 15.4L15.8 19.7H22.5" fill="none" stroke="#323130" stroke-width="1.6"/></svg>
<div class="t" style="left:2405.8px;top:891px;font-size:17.5px;letter-spacing:-0.53px;color:#252423;">Blank</div>
<svg style="left:2496.2px;top:891.0px;" width="19" height="15" viewBox="0 0 19 15"><path d="M0.4 7.8Q9.2 -6.6 18 7.8" fill="none" stroke="#605e5c" stroke-width="1.2"/><path d="M5.6 9.2A3.4 3.4 0 1 0 8 5.6" fill="none" stroke="#605e5c" stroke-width="1.2"/><path d="M1.3 0.4L15.8 14.6" stroke="#605e5c" stroke-width="1.2"/></svg>
<div class="a" style="left:2348px;top:925.0px;width:18px;height:18px;border:1px solid #8a8886;border-radius:3.5px;"></div>
<div class="t" style="left:2405.8px;top:927px;font-size:17.5px;letter-spacing:-0.29px;color:#252423;">Campaig...</div>
<svg style="left:2496.2px;top:927.0px;" width="19" height="15" viewBox="0 0 19 15"><path d="M0.4 7.8Q9.2 -6.6 18 7.8" fill="none" stroke="#605e5c" stroke-width="1.2"/><path d="M5.6 9.2A3.4 3.4 0 1 0 8 5.6" fill="none" stroke="#605e5c" stroke-width="1.2"/><path d="M1.3 0.4L15.8 14.6" stroke="#605e5c" stroke-width="1.2"/></svg>
<div class="a" style="left:2348px;top:961.0px;width:18px;height:18px;border:1px solid #8a8886;border-radius:3.5px;"></div>
<svg style="left:2378px;top:958.0px;" width="17" height="24" viewBox="0 0 17 24"><rect x="0.9" y="0.9" width="14.8" height="22" fill="none" stroke="#323130" stroke-width="1.8"/><rect x="3.8" y="4" width="9" height="3" fill="none" stroke="#323130" stroke-width="1.2"/><rect x="3.5" y="10.5" width="1.4" height="1.4" fill="#323130"/><rect x="7.9" y="10.5" width="1.4" height="1.4" fill="#323130"/><rect x="12.3" y="10.5" width="1.4" height="1.4" fill="#323130"/><rect x="3.5" y="15.0" width="1.4" height="1.4" fill="#323130"/><rect x="7.9" y="15.0" width="1.4" height="1.4" fill="#323130"/><rect x="12.3" y="15.0" width="1.4" height="1.4" fill="#323130"/><rect x="3.5" y="19.5" width="1.4" height="1.4" fill="#323130"/><rect x="7.9" y="19.5" width="1.4" height="1.4" fill="#323130"/><rect x="12.3" y="19.5" width="1.4" height="1.4" fill="#323130"/></svg>
<div class="t" style="left:2405.8px;top:963px;font-size:17.5px;letter-spacing:-0.66px;color:#252423;">Close %</div>
<div class="a" style="left:2348px;top:997.0px;width:18px;height:18px;border:1px solid #8a8886;border-radius:3.5px;"></div>
<div class="t" style="left:2405.8px;top:999px;font-size:17.5px;letter-spacing:-0.19px;color:#252423;">Close date</div>
<div class="a" style="left:2348px;top:1033.0px;width:18px;height:18px;border:1px solid #8a8886;border-radius:3.5px;"></div>
<svg style="left:2378px;top:1030.0px;" width="17" height="24" viewBox="0 0 17 24"><rect x="0.9" y="0.9" width="14.8" height="22" fill="none" stroke="#323130" stroke-width="1.8"/><rect x="3.8" y="4" width="9" height="3" fill="none" stroke="#323130" stroke-width="1.2"/><rect x="3.5" y="10.5" width="1.4" height="1.4" fill="#323130"/><rect x="7.9" y="10.5" width="1.4" height="1.4" fill="#323130"/><rect x="12.3" y="10.5" width="1.4" height="1.4" fill="#323130"/><rect x="3.5" y="15.0" width="1.4" height="1.4" fill="#323130"/><rect x="7.9" y="15.0" width="1.4" height="1.4" fill="#323130"/><rect x="12.3" y="15.0" width="1.4" height="1.4" fill="#323130"/><rect x="3.5" y="19.5" width="1.4" height="1.4" fill="#323130"/><rect x="7.9" y="19.5" width="1.4" height="1.4" fill="#323130"/><rect x="12.3" y="19.5" width="1.4" height="1.4" fill="#323130"/></svg>
<div class="t" style="left:2405.4px;top:1035px;font-size:17.5px;letter-spacing:-0.20px;color:#252423;">Close tar...</div>
<svg style="left:2496.2px;top:1035.0px;" width="19" height="15" viewBox="0 0 19 15"><path d="M0.4 7.8Q9.2 -6.6 18 7.8" fill="none" stroke="#605e5c" stroke-width="1.2"/><path d="M5.6 9.2A3.4 3.4 0 1 0 8 5.6" fill="none" stroke="#605e5c" stroke-width="1.2"/><path d="M1.3 0.4L15.8 14.6" stroke="#605e5c" stroke-width="1.2"/></svg>
<div class="a" style="left:2348px;top:1069.0px;width:18px;height:18px;border:1px solid #8a8886;border-radius:3.5px;"></div>
<svg style="left:2378px;top:1066.0px;" width="17" height="24" viewBox="0 0 17 24"><rect x="0.9" y="0.9" width="14.8" height="22" fill="none" stroke="#323130" stroke-width="1.8"/><rect x="3.8" y="4" width="9" height="3" fill="none" stroke="#323130" stroke-width="1.2"/><rect x="3.5" y="10.5" width="1.4" height="1.4" fill="#323130"/><rect x="7.9" y="10.5" width="1.4" height="1.4" fill="#323130"/><rect x="12.3" y="10.5" width="1.4" height="1.4" fill="#323130"/><rect x="3.5" y="15.0" width="1.4" height="1.4" fill="#323130"/><rect x="7.9" y="15.0" width="1.4" height="1.4" fill="#323130"/><rect x="12.3" y="15.0" width="1.4" height="1.4" fill="#323130"/><rect x="3.5" y="19.5" width="1.4" height="1.4" fill="#323130"/><rect x="7.9" y="19.5" width="1.4" height="1.4" fill="#323130"/><rect x="12.3" y="19.5" width="1.4" height="1.4" fill="#323130"/></svg>
<div class="t" style="left:2405.4px;top:1071px;font-size:17.5px;letter-spacing:0.18px;color:#252423;">Count of Lost</div>
<div class="a" style="left:2348px;top:1105.0px;width:18px;height:18px;border:1px solid #8a8886;border-radius:3.5px;"></div>
<svg style="left:2378px;top:1102.0px;" width="17" height="24" viewBox="0 0 17 24"><rect x="0.9" y="0.9" width="14.8" height="22" fill="none" stroke="#323130" stroke-width="1.8"/><rect x="3.8" y="4" width="9" height="3" fill="none" stroke="#323130" stroke-width="1.2"/><rect x="3.5" y="10.5" width="1.4" height="1.4" fill="#323130"/><rect x="7.9" y="10.5" width="1.4" height="1.4" fill="#323130"/><rect x="12.3" y="10.5" width="1.4" height="1.4" fill="#323130"/><rect x="3.5" y="15.0" width="1.4" height="1.4" fill="#323130"/><rect x="7.9" y="15.0" width="1.4" height="1.4" fill="#323130"/><rect x="12.3" y="15.0" width="1.4" height="1.4" fill="#323130"/><rect x="3.5" y="19.5" width="1.4" height="1.4" fill="#323130"/><rect x="7.9" y="19.5" width="1.4" height="1.4" fill="#323130"/><rect x="12.3" y="19.5" width="1.4" height="1.4" fill="#323130"/></svg>
<div class="t" style="left:2405.4px;top:1107px;font-size:17.5px;letter-spacing:0.29px;color:#252423;">Count of Open</div>
<div class="a" style="left:2348px;top:1141.0px;width:18px;height:18px;border:1px solid #8a8886;border-radius:3.5px;"></div>
<svg style="left:2378px;top:1138.0px;" width="17" height="24" viewBox="0 0 17 24"><rect x="0.9" y="0.9" width="14.8" height="22" fill="none" stroke="#323130" stroke-width="1.8"/><rect x="3.8" y="4" width="9" height="3" fill="none" stroke="#323130" stroke-width="1.2"/><rect x="3.5" y="10.5" width="1.4" height="1.4" fill="#323130"/><rect x="7.9" y="10.5" width="1.4" height="1.4" fill="#323130"/><rect x="12.3" y="10.5" width="1.4" height="1.4" fill="#323130"/><rect x="3.5" y="15.0" width="1.4" height="1.4" fill="#323130"/><rect x="7.9" y="15.0" width="1.4" height="1.4" fill="#323130"/><rect x="12.3" y="15.0" width="1.4" height="1.4" fill="#323130"/><rect x="3.5" y="19.5" width="1.4" height="1.4" fill="#323130"/><rect x="7.9" y="19.5" width="1.4" height="1.4" fill="#323130"/><rect x="12.3" y="19.5" width="1.4" height="1.4" fill="#323130"/></svg>
<div class="t" style="left:2405.4px;top:1143px;font-size:17.5px;letter-spacing:0.30px;color:#252423;">Count of Won</div>
<div class="a" style="left:2348px;top:1177.0px;width:18px;height:18px;border:1px solid #8a8886;border-radius:3.5px;"></div>
<svg style="left:2379px;top:1175.4px;" width="16" height="21" viewBox="0 0 16 21"><path d="M15 0.9H1.5L8.8 10.3L1.5 19.8H15.2" fill="none" stroke="#323130" stroke-width="1.6" stroke-linejoin="miter"/></svg>
<div class="t" style="left:2405.4px;top:1179px;font-size:17.5px;letter-spacing:0.12px;color:#252423;">DateDiff-...</div>
<svg style="left:2496.2px;top:1179.0px;" width="19" height="15" viewBox="0 0 19 15"><path d="M0.4 7.8Q9.2 -6.6 18 7.8" fill="none" stroke="#605e5c" stroke-width="1.2"/><path d="M5.6 9.2A3.4 3.4 0 1 0 8 5.6" fill="none" stroke="#605e5c" stroke-width="1.2"/><path d="M1.3 0.4L15.8 14.6" stroke="#605e5c" stroke-width="1.2"/></svg>
<div class="a" style="left:2348px;top:1213.0px;width:18px;height:18px;border:1px solid #8a8886;border-radius:3.5px;"></div>
<svg style="left:2376.3px;top:1213.1px;" width="23" height="21" viewBox="0 0 23 21"><rect x="0.9" y="0.9" width="18.2" height="16.4" fill="none" stroke="#323130" stroke-width="1.8"/><path d="M0.9 3.7H19.1" stroke="#323130" stroke-width="1.5"/><path d="M6.6 3.7V17.3M12.9 3.7V17.3M6.6 8.3H19.1M6.6 12.8H19.1" stroke="#323130" stroke-width="1.4" fill="none"/><rect x="14.2" y="10.2" width="9" height="11" fill="#f3f2f1"/><path d="M22.3 11.2H15.8L19.3 15.4L15.8 19.7H22.5" fill="none" stroke="#323130" stroke-width="1.6"/></svg>
<div class="t" style="left:2405.4px;top:1215px;font-size:17.5px;letter-spacing:-0.22px;color:#252423;">Days Open</div>
<div class="a" style="left:2348px;top:1249.0px;width:18px;height:18px;border:1px solid #8a8886;border-radius:3.5px;"></div>
<svg style="left:2376.3px;top:1249.1px;" width="23" height="21" viewBox="0 0 23 21"><rect x="0.9" y="0.9" width="18.2" height="16.4" fill="none" stroke="#323130" stroke-width="1.8"/><path d="M0.9 3.7H19.1" stroke="#323130" stroke-width="1.5"/><path d="M6.6 3.7V17.3M12.9 3.7V17.3M6.6 8.3H19.1M6.6 12.8H19.1" stroke="#323130" stroke-width="1.4" fill="none"/><rect x="14.2" y="10.2" width="9" height="11" fill="#f3f2f1"/><path d="M22.3 11.2H15.8L19.3 15.4L15.8 19.7H22.5" fill="none" stroke="#323130" stroke-width="1.6"/></svg>
<div class="t" style="left:2405.4px;top:1251px;font-size:17.5px;letter-spacing:-0.29px;color:#252423;">Days Remainin...</div>
<div class="a" style="left:2348px;top:1285.0px;width:18px;height:18px;border:1px solid #8a8886;border-radius:3.5px;"></div>
<svg style="left:2374.8px;top:1282.0px;" width="23" height="23" viewBox="0 0 23 23"><rect x="0.8" y="0.8" width="21.4" height="21.2" fill="none" stroke="#323130" stroke-width="1.4" stroke-dasharray="1.4 1.4"/><rect x="5.2" y="5" width="12.6" height="12.3" fill="none" stroke="#323130" stroke-width="1.5"/><path d="M5.2 11.2H17.8M11.5 5V17.3" stroke="#323130" stroke-width="1.4"/></svg>
<div class="t" style="left:2405.4px;top:1287px;font-size:17.5px;letter-spacing:-0.29px;color:#252423;">Days Remainin...</div>
<div class="a" style="left:2348px;top:1321.0px;width:18px;height:18px;border:1px solid #8a8886;border-radius:3.5px;"></div>
<svg style="left:2379px;top:1319.4px;" width="16" height="21" viewBox="0 0 16 21"><path d="M15 0.9H1.5L8.8 10.3L1.5 19.8H15.2" fill="none" stroke="#323130" stroke-width="1.6" stroke-linejoin="miter"/></svg>
<div class="t" style="left:2405.4px;top:1323px;font-size:17.5px;letter-spacing:-0.54px;color:#252423;">DaysToCl...</div>
<svg style="left:2496.2px;top:1323.0px;" width="19" height="15" viewBox="0 0 19 15"><path d="M0.4 7.8Q9.2 -6.6 18 7.8" fill="none" stroke="#605e5c" stroke-width="1.2"/><path d="M5.6 9.2A3.4 3.4 0 1 0 8 5.6" fill="none" stroke="#605e5c" stroke-width="1.2"/><path d="M1.3 0.4L15.8 14.6" stroke="#605e5c" stroke-width="1.2"/></svg>
<div class="a" style="left:2348px;top:1357.0px;width:18px;height:18px;border:1px solid #8a8886;border-radius:3.5px;"></div>
<div class="t" style="left:2405.4px;top:1359px;font-size:17.5px;letter-spacing:0.02px;color:#252423;">Decision Maker...</div>
<div class="a" style="left:2348px;top:1393.0px;width:18px;height:18px;border:1px solid #8a8886;border-radius:3.5px;"></div>
<div class="t" style="left:2405.4px;top:1395px;font-size:17.5px;letter-spacing:0.16px;color:#252423;">Discount</div>
</div>
</div>
<!-- STATUS -->
<div id="status" class="a">
<div class="a" style="left:0;top:-1405px"><div class="t" style="left:7.8px;top:1415px;font-size:17.5px;letter-spacing:-0.13px;color:#484644;">Page 3 of 9</div>
<div class="t" style="left:2266.0px;top:1414px;font-size:17.5px;letter-spacing:0.18px;color:#484644;">Update available (click to download)</div>
</div>
</div>
<div id="taskbar" class="a"></div>
</body>
</html>
